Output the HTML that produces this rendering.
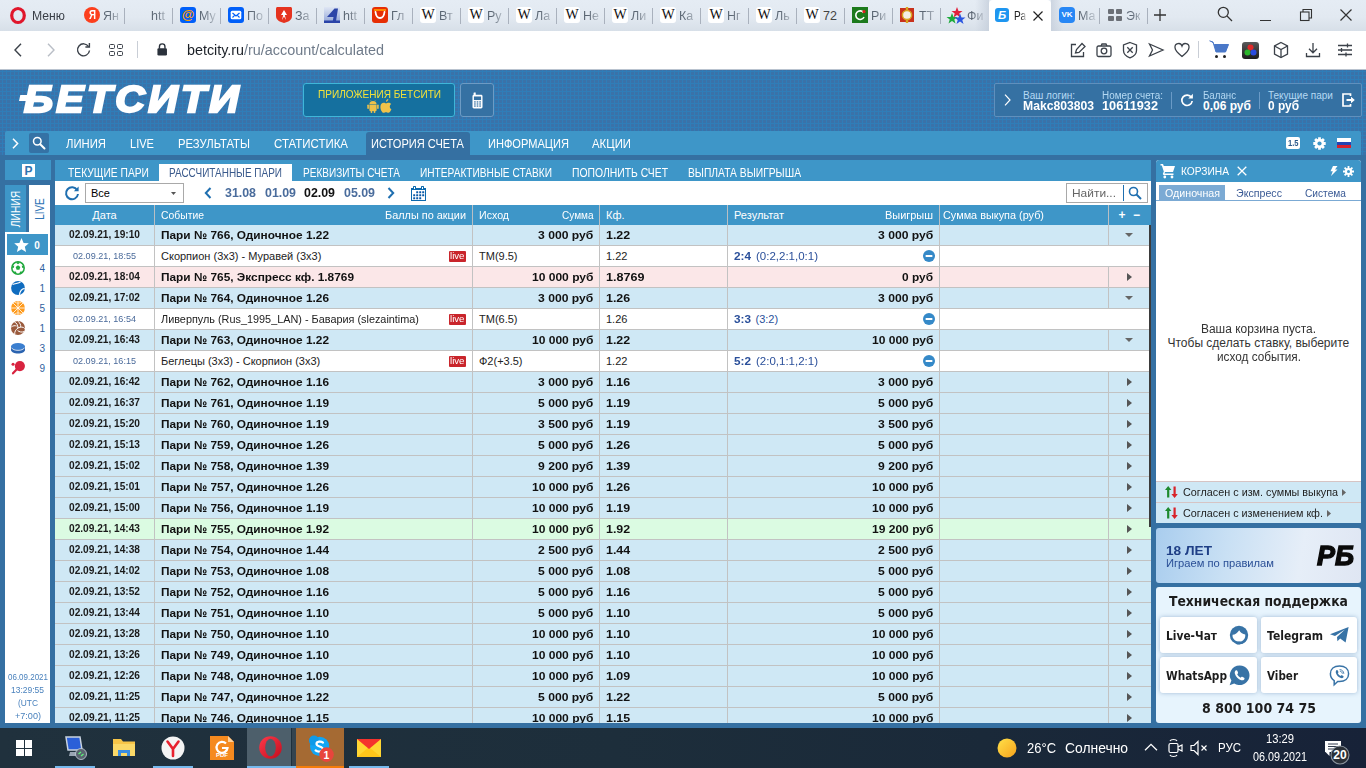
<!DOCTYPE html>
<html lang="ru"><head><meta charset="utf-8"><title>Рассчитанные пари - БЕТСИТИ</title>
<style>
html,body{margin:0;padding:0}
body{width:1366px;height:768px;overflow:hidden;position:relative;background-color:#3a72a9;
background-image:linear-gradient(#2f7db8 1px,transparent 1px),linear-gradient(90deg,#2f7db8 1px,transparent 1px);background-size:4px 4px;background-position:2px 3px;
font-family:"Liberation Sans",sans-serif}
.t{position:absolute;white-space:pre;display:block}
svg{position:absolute;overflow:visible}
div{box-sizing:border-box}
</style></head><body>
<div style="position:absolute;left:0px;top:0px;width:1366px;height:31px;background:linear-gradient(#e5ecf4,#e2e9f1 55%,#d7dfe8);"></div>
<div style="position:absolute;left:975px;top:0px;width:14px;height:31px;background:linear-gradient(90deg,rgba(196,205,218,0),rgba(196,205,218,.75));"></div>
<div style="position:absolute;left:1051px;top:0px;width:12px;height:31px;background:linear-gradient(270deg,rgba(196,205,218,0),rgba(196,205,218,.75));"></div>
<div style="position:absolute;left:989px;top:0px;width:62px;height:31px;background:#fff;border-radius:4px 4px 0 0;"></div>
<div style="position:absolute;left:124px;top:8px;width:1px;height:16px;background:#a9b1bd;"></div>
<div style="position:absolute;left:172px;top:8px;width:1px;height:16px;background:#a9b1bd;"></div>
<div style="position:absolute;left:220px;top:8px;width:1px;height:16px;background:#a9b1bd;"></div>
<div style="position:absolute;left:268px;top:8px;width:1px;height:16px;background:#a9b1bd;"></div>
<div style="position:absolute;left:316px;top:8px;width:1px;height:16px;background:#a9b1bd;"></div>
<div style="position:absolute;left:364px;top:8px;width:1px;height:16px;background:#a9b1bd;"></div>
<div style="position:absolute;left:412px;top:8px;width:1px;height:16px;background:#a9b1bd;"></div>
<div style="position:absolute;left:460px;top:8px;width:1px;height:16px;background:#a9b1bd;"></div>
<div style="position:absolute;left:508px;top:8px;width:1px;height:16px;background:#a9b1bd;"></div>
<div style="position:absolute;left:556px;top:8px;width:1px;height:16px;background:#a9b1bd;"></div>
<div style="position:absolute;left:604px;top:8px;width:1px;height:16px;background:#a9b1bd;"></div>
<div style="position:absolute;left:652px;top:8px;width:1px;height:16px;background:#a9b1bd;"></div>
<div style="position:absolute;left:700px;top:8px;width:1px;height:16px;background:#a9b1bd;"></div>
<div style="position:absolute;left:748px;top:8px;width:1px;height:16px;background:#a9b1bd;"></div>
<div style="position:absolute;left:796px;top:8px;width:1px;height:16px;background:#a9b1bd;"></div>
<div style="position:absolute;left:844px;top:8px;width:1px;height:16px;background:#a9b1bd;"></div>
<div style="position:absolute;left:892px;top:8px;width:1px;height:16px;background:#a9b1bd;"></div>
<div style="position:absolute;left:940px;top:8px;width:1px;height:16px;background:#a9b1bd;"></div>
<div style="position:absolute;left:1099px;top:8px;width:1px;height:16px;background:#a9b1bd;"></div>
<div style="position:absolute;left:1147px;top:8px;width:1px;height:16px;background:#a9b1bd;"></div>
<div style="position:absolute;left:0px;top:31px;width:1366px;height:38px;background:#fff;"></div>
<div style="position:absolute;left:0px;top:69px;width:1366px;height:1px;background:#b9c3cf;"></div>
<div style="position:absolute;left:5px;top:131px;width:1356px;height:24px;background:#3e96c8;border-radius:2px 2px 0 0;"></div>
<div style="position:absolute;left:29px;top:133px;width:20px;height:20px;background:#3572a5;border-radius:2px;"></div>
<div style="position:absolute;left:366px;top:132px;width:104px;height:23px;background:#3570a2;border-radius:3px 3px 0 0;"></div>
<span class="t" style="left:66.00px;top:135.00px;line-height:17px;color:#fff;font-family:'Liberation Sans', sans-serif;font-size:13px;font-weight:normal;transform:scaleX(0.8696);transform-origin:0 0;">ЛИНИЯ</span>
<span class="t" style="left:130.00px;top:135.00px;line-height:17px;color:#fff;font-family:'Liberation Sans', sans-serif;font-size:13px;font-weight:normal;transform:scaleX(0.8514);transform-origin:0 0;">LIVE</span>
<span class="t" style="left:178.00px;top:135.00px;line-height:17px;color:#fff;font-family:'Liberation Sans', sans-serif;font-size:13px;font-weight:normal;transform:scaleX(0.8678);transform-origin:0 0;">РЕЗУЛЬТАТЫ</span>
<span class="t" style="left:274.00px;top:135.00px;line-height:17px;color:#fff;font-family:'Liberation Sans', sans-serif;font-size:13px;font-weight:normal;transform:scaleX(0.8821);transform-origin:0 0;">СТАТИСТИКА</span>
<span class="t" style="left:371.00px;top:135.00px;line-height:17px;color:#fff;font-family:'Liberation Sans', sans-serif;font-size:13px;font-weight:normal;transform:scaleX(0.8511);transform-origin:0 0;">ИСТОРИЯ СЧЕТА</span>
<span class="t" style="left:488.00px;top:135.00px;line-height:17px;color:#fff;font-family:'Liberation Sans', sans-serif;font-size:13px;font-weight:normal;transform:scaleX(0.8517);transform-origin:0 0;">ИНФОРМАЦИЯ</span>
<span class="t" style="left:592.00px;top:135.00px;line-height:17px;color:#fff;font-family:'Liberation Sans', sans-serif;font-size:13px;font-weight:normal;transform:scaleX(0.8752);transform-origin:0 0;">АКЦИИ</span>
<div style="position:absolute;left:0px;top:155px;width:1366px;height:573px;background:#3570a2;"></div>
<div style="position:absolute;left:55px;top:160px;width:1096px;height:563px;background:#fff;"></div>
<div style="position:absolute;left:55px;top:160px;width:1096px;height:21px;background:#3e96c8;"></div>
<div style="position:absolute;left:159px;top:164px;width:133px;height:17px;background:#fff;"></div>
<span class="t" style="left:68.00px;top:165.00px;line-height:16px;color:#fff;font-family:'Liberation Sans', sans-serif;font-size:12px;font-weight:normal;transform:scaleX(0.8566);transform-origin:0 0;">ТЕКУЩИЕ ПАРИ</span>
<span class="t" style="left:169.00px;top:165.00px;line-height:16px;color:#3a5a8c;font-family:'Liberation Sans', sans-serif;font-size:12px;font-weight:normal;transform:scaleX(0.8310);transform-origin:0 0;">РАССЧИТАННЫЕ ПАРИ</span>
<span class="t" style="left:303.00px;top:165.00px;line-height:16px;color:#fff;font-family:'Liberation Sans', sans-serif;font-size:12px;font-weight:normal;transform:scaleX(0.8362);transform-origin:0 0;">РЕКВИЗИТЫ СЧЕТА</span>
<span class="t" style="left:420.00px;top:165.00px;line-height:16px;color:#fff;font-family:'Liberation Sans', sans-serif;font-size:12px;font-weight:normal;transform:scaleX(0.8449);transform-origin:0 0;">ИНТЕРАКТИВНЫЕ СТАВКИ</span>
<span class="t" style="left:572.00px;top:165.00px;line-height:16px;color:#fff;font-family:'Liberation Sans', sans-serif;font-size:12px;font-weight:normal;transform:scaleX(0.8641);transform-origin:0 0;">ПОПОЛНИТЬ СЧЕТ</span>
<span class="t" style="left:688.00px;top:165.00px;line-height:16px;color:#fff;font-family:'Liberation Sans', sans-serif;font-size:12px;font-weight:normal;transform:scaleX(0.8571);transform-origin:0 0;">ВЫПЛАТА ВЫИГРЫША</span>
<svg style="left:64px;top:185px" width="16" height="16" viewBox="0 0 16 16"><path d="M13.2 5.2A6 6 0 1 0 14 9" fill="none" stroke="#1f6fb0" stroke-width="2"/><path d="M14.6 1.5V6.3H9.8Z" fill="#1f6fb0"/></svg>
<div style="position:absolute;left:85px;top:183px;width:99px;height:20px;background:#fff;border:1px solid #a9a9a9;"></div>
<span class="t" style="left:91.00px;top:186.00px;line-height:14px;color:#000;font-family:'Liberation Sans', sans-serif;font-size:11px;font-weight:normal;">Все</span>
<svg style="left:171px;top:192px" width="5" height="3" viewBox="0 0 5 3"><path d="M0 0H5L2.5 3Z" fill="#555"/></svg>
<svg style="left:204px;top:187px" width="8" height="12" viewBox="0 0 8 12"><path d="M6.5 1L1.8 6L6.5 11" fill="none" stroke="#1f6fb0" stroke-width="2"/></svg>
<svg style="left:387px;top:187px" width="8" height="12" viewBox="0 0 8 12"><path d="M1.5 1L6.2 6L1.5 11" fill="none" stroke="#1f6fb0" stroke-width="2"/></svg>
<span class="t" style="left:225.00px;top:185.00px;line-height:16px;color:#4a6c9c;font-family:'Liberation Sans', sans-serif;font-size:12px;font-weight:bold;transform:scaleX(1.0323);transform-origin:0 0;">31.08</span>
<span class="t" style="left:265.00px;top:185.00px;line-height:16px;color:#4a6c9c;font-family:'Liberation Sans', sans-serif;font-size:12px;font-weight:bold;transform:scaleX(1.0323);transform-origin:0 0;">01.09</span>
<span class="t" style="left:304.00px;top:185.00px;line-height:16px;color:#111;font-family:'Liberation Sans', sans-serif;font-size:12px;font-weight:bold;transform:scaleX(1.0323);transform-origin:0 0;">02.09</span>
<span class="t" style="left:344.00px;top:185.00px;line-height:16px;color:#4a6c9c;font-family:'Liberation Sans', sans-serif;font-size:12px;font-weight:bold;transform:scaleX(1.0323);transform-origin:0 0;">05.09</span>
<svg style="left:411px;top:186px" width="15" height="15" viewBox="0 0 15 15"><rect x="0.500" y="2.500" width="14" height="12" fill="#fff" stroke="#0c69ad" stroke-width="1"/><rect x="0" y="2" width="15" height="2" fill="#0c69ad"/><rect x="2" y="0" width="3" height="4" rx="0.500" fill="#0c69ad"/><rect x="10" y="0" width="3" height="4" rx="0.500" fill="#0c69ad"/><rect x="3" y="1" width="1" height="2" fill="#fff"/><rect x="11" y="1" width="1" height="2" fill="#fff"/><rect x="2.2" y="8.3" width="2" height="2" rx="0.300" fill="#0a5aa8"/><rect x="2.2" y="11.3" width="2" height="2" rx="0.300" fill="#0a5aa8"/><rect x="5.2" y="5.3" width="2" height="2" rx="0.300" fill="#0a5aa8"/><rect x="5.2" y="8.3" width="2" height="2" rx="0.300" fill="#0a5aa8"/><rect x="5.2" y="11.3" width="2" height="2" rx="0.300" fill="#0a5aa8"/><rect x="8.2" y="5.3" width="2" height="2" rx="0.300" fill="#0a5aa8"/><rect x="8.2" y="8.3" width="2" height="2" rx="0.300" fill="#0a5aa8"/><rect x="8.2" y="11.3" width="2" height="2" rx="0.300" fill="#0a5aa8"/><rect x="11.2" y="5.3" width="2" height="2" rx="0.300" fill="#0a5aa8"/><rect x="11.2" y="8.3" width="2" height="2" rx="0.300" fill="#0a5aa8"/></svg>
<div style="position:absolute;left:1066px;top:183px;width:82px;height:20px;background:#fff;border:1px solid #a9a9a9;"></div>
<span class="t" style="left:1071.50px;top:186.00px;line-height:14px;color:#666;font-family:'Liberation Sans', sans-serif;font-size:11px;font-weight:normal;transform:scaleX(1.0847);transform-origin:0 0;">Найти...</span>
<div style="position:absolute;left:1123px;top:185px;width:1px;height:16px;background:#1f6fb0;"></div>
<svg style="left:1128px;top:186px" width="14" height="14" viewBox="0 0 14 14"><circle cx="5.5" cy="5.5" r="4" fill="none" stroke="#1f6fb0" stroke-width="1.6"/><path d="M8.5 8.5L13 13" stroke="#1f6fb0" stroke-width="2"/></svg>
<div style="position:absolute;left:55px;top:205px;width:1096px;height:20px;background:#3e96c8;"></div>
<div style="position:absolute;left:154px;top:205px;width:1px;height:20px;background:#b9bfc4;"></div>
<div style="position:absolute;left:472px;top:205px;width:1px;height:20px;background:#b9bfc4;"></div>
<div style="position:absolute;left:599px;top:205px;width:1px;height:20px;background:#b9bfc4;"></div>
<div style="position:absolute;left:727px;top:205px;width:1px;height:20px;background:#b9bfc4;"></div>
<div style="position:absolute;left:939px;top:205px;width:1px;height:20px;background:#b9bfc4;"></div>
<div style="position:absolute;left:1108px;top:205px;width:1px;height:20px;background:#b9bfc4;"></div>
<span class="t" style="left:92.32px;top:208.00px;line-height:14px;color:#fff;font-family:'Liberation Sans', sans-serif;font-size:11px;font-weight:normal;">Дата</span>
<span class="t" style="left:161.00px;top:208.00px;line-height:14px;color:#fff;font-family:'Liberation Sans', sans-serif;font-size:11px;font-weight:normal;transform:scaleX(0.9434);transform-origin:0 0;">Событие</span>
<span class="t" style="left:385.00px;top:208.00px;line-height:14px;color:#fff;font-family:'Liberation Sans', sans-serif;font-size:11px;font-weight:normal;transform:scaleX(0.9903);transform-origin:0 0;">Баллы по акции</span>
<span class="t" style="left:479.00px;top:208.00px;line-height:14px;color:#fff;font-family:'Liberation Sans', sans-serif;font-size:11px;font-weight:normal;transform:scaleX(0.9653);transform-origin:0 0;">Исход</span>
<span class="t" style="left:561.50px;top:208.00px;line-height:14px;color:#fff;font-family:'Liberation Sans', sans-serif;font-size:11px;font-weight:normal;transform:scaleX(0.9110);transform-origin:0 0;">Сумма</span>
<span class="t" style="left:606.00px;top:208.00px;line-height:14px;color:#fff;font-family:'Liberation Sans', sans-serif;font-size:11px;font-weight:normal;">Кф.</span>
<span class="t" style="left:734.00px;top:208.00px;line-height:14px;color:#fff;font-family:'Liberation Sans', sans-serif;font-size:11px;font-weight:normal;">Результат</span>
<span class="t" style="left:885.00px;top:208.00px;line-height:14px;color:#fff;font-family:'Liberation Sans', sans-serif;font-size:11px;font-weight:normal;transform:scaleX(0.9948);transform-origin:0 0;">Выигрыш</span>
<span class="t" style="left:943.00px;top:208.00px;line-height:14px;color:#fff;font-family:'Liberation Sans', sans-serif;font-size:11px;font-weight:normal;transform:scaleX(0.9884);transform-origin:0 0;">Сумма выкупа (руб)</span>
<span class="t" style="left:1118.49px;top:206.50px;line-height:16px;color:#fff;font-family:'Liberation Sans', sans-serif;font-size:12px;font-weight:bold;">+</span>
<span class="t" style="left:1132.99px;top:206.50px;line-height:16px;color:#fff;font-family:'Liberation Sans', sans-serif;font-size:12px;font-weight:bold;">−</span>
<div style="position:absolute;left:0;top:0;width:1366px;height:723px;overflow:hidden">
<div style="position:absolute;left:55px;top:225px;width:1096px;height:20px;background:#cfe8f5;"></div>
<div style="position:absolute;left:55px;top:245px;width:1096px;height:1px;background:#c2c2c2;"></div>
<div style="position:absolute;left:154px;top:225px;width:1px;height:21px;background:#c2c2c2;"></div>
<div style="position:absolute;left:472px;top:225px;width:1px;height:21px;background:#c2c2c2;"></div>
<div style="position:absolute;left:599px;top:225px;width:1px;height:21px;background:#c2c2c2;"></div>
<div style="position:absolute;left:727px;top:225px;width:1px;height:21px;background:#c2c2c2;"></div>
<div style="position:absolute;left:939px;top:225px;width:1px;height:21px;background:#c2c2c2;"></div>
<div style="position:absolute;left:1108px;top:225px;width:1px;height:21px;background:#c2c2c2;"></div>
<span class="t" style="left:68.70px;top:228.40px;line-height:13px;color:#1a1a1a;font-family:'Liberation Sans', sans-serif;font-size:10px;font-weight:bold;transform:scaleX(1.0134);transform-origin:0 0;">02.09.21, 19:10</span>
<span class="t" style="left:161.00px;top:227.50px;line-height:15px;color:#111;font-family:'Liberation Sans', sans-serif;font-size:11.5px;font-weight:bold;transform:scaleX(1.0314);transform-origin:0 0;">Пари № 766, Одиночное 1.22</span>
<span class="t" style="left:537.70px;top:227.50px;line-height:15px;color:#111;font-family:'Liberation Sans', sans-serif;font-size:11.5px;font-weight:bold;transform:scaleX(1.0562);transform-origin:0 0;">3 000 руб</span>
<span class="t" style="left:606.00px;top:227.50px;line-height:15px;color:#111;font-family:'Liberation Sans', sans-serif;font-size:11.5px;font-weight:bold;transform:scaleX(1.0808);transform-origin:0 0;">1.22</span>
<span class="t" style="left:877.70px;top:227.50px;line-height:15px;color:#111;font-family:'Liberation Sans', sans-serif;font-size:11.5px;font-weight:bold;transform:scaleX(1.0562);transform-origin:0 0;">3 000 руб</span>
<svg style="left:1125px;top:233px" width="8" height="4" viewBox="0 0 8 4"><path d="M0 0H8L4 4Z" fill="#666"/></svg>
<div style="position:absolute;left:55px;top:246px;width:1096px;height:20px;background:#fff;"></div>
<div style="position:absolute;left:55px;top:266px;width:1096px;height:1px;background:#c2c2c2;"></div>
<div style="position:absolute;left:154px;top:246px;width:1px;height:21px;background:#c2c2c2;"></div>
<div style="position:absolute;left:472px;top:246px;width:1px;height:21px;background:#c2c2c2;"></div>
<div style="position:absolute;left:599px;top:246px;width:1px;height:21px;background:#c2c2c2;"></div>
<div style="position:absolute;left:727px;top:246px;width:1px;height:21px;background:#c2c2c2;"></div>
<div style="position:absolute;left:939px;top:246px;width:1px;height:21px;background:#c2c2c2;"></div>
<span class="t" style="left:73.00px;top:250.00px;line-height:12px;color:#4a6a9a;font-family:'Liberation Sans', sans-serif;font-size:9px;font-weight:normal;transform:scaleX(1.0070);transform-origin:0 0;">02.09.21, 18:55</span>
<span class="t" style="left:161.00px;top:249.00px;line-height:14px;color:#222;font-family:'Liberation Sans', sans-serif;font-size:11px;font-weight:normal;">Скорпион (3x3) - Муравей (3x3)</span>
<div style="position:absolute;left:449px;top:251px;width:17px;height:11px;background:#c9252b;border-radius:1px;"></div>
<span class="t" style="left:450.25px;top:250.30px;line-height:12px;color:#fff;font-family:'Liberation Sans', sans-serif;font-size:9.5px;font-weight:normal;transform:scaleX(1.0164);transform-origin:0 0;">live</span>
<span class="t" style="left:479.00px;top:249.00px;line-height:14px;color:#222;font-family:'Liberation Sans', sans-serif;font-size:11px;font-weight:normal;">ТМ(9.5)</span>
<span class="t" style="left:606.00px;top:249.00px;line-height:14px;color:#222;font-family:'Liberation Sans', sans-serif;font-size:11px;font-weight:normal;">1.22</span>
<span class="t" style="left:734.00px;top:249.00px;line-height:14px;color:#2a4f9a;font-family:'Liberation Sans', sans-serif;font-size:11px;font-weight:bold;transform:scaleX(1.0688);transform-origin:0 0;">2:4</span>
<span class="t" style="left:755.50px;top:249.00px;line-height:14px;color:#2a4f9a;font-family:'Liberation Sans', sans-serif;font-size:11px;font-weight:normal;transform:scaleX(1.0450);transform-origin:0 0;">(0:2,2:1,0:1)</span>
<svg style="left:923px;top:250px" width="12" height="12" viewBox="0 0 12 12"><circle cx="6" cy="6" r="6" fill="#3589c8"/><rect x="2.600" y="5" width="6.800" height="2" rx="0.500" fill="#fff"/></svg>
<div style="position:absolute;left:55px;top:267px;width:1096px;height:20px;background:#fbe7e8;"></div>
<div style="position:absolute;left:55px;top:287px;width:1096px;height:1px;background:#c2c2c2;"></div>
<div style="position:absolute;left:154px;top:267px;width:1px;height:21px;background:#c2c2c2;"></div>
<div style="position:absolute;left:472px;top:267px;width:1px;height:21px;background:#c2c2c2;"></div>
<div style="position:absolute;left:599px;top:267px;width:1px;height:21px;background:#c2c2c2;"></div>
<div style="position:absolute;left:727px;top:267px;width:1px;height:21px;background:#c2c2c2;"></div>
<div style="position:absolute;left:939px;top:267px;width:1px;height:21px;background:#c2c2c2;"></div>
<div style="position:absolute;left:1108px;top:267px;width:1px;height:21px;background:#c2c2c2;"></div>
<span class="t" style="left:68.70px;top:270.40px;line-height:13px;color:#1a1a1a;font-family:'Liberation Sans', sans-serif;font-size:10px;font-weight:bold;transform:scaleX(1.0134);transform-origin:0 0;">02.09.21, 18:04</span>
<span class="t" style="left:161.00px;top:269.50px;line-height:15px;color:#111;font-family:'Liberation Sans', sans-serif;font-size:11.5px;font-weight:bold;transform:scaleX(1.0312);transform-origin:0 0;">Пари № 765, Экспресс кф. 1.8769</span>
<span class="t" style="left:531.50px;top:269.50px;line-height:15px;color:#111;font-family:'Liberation Sans', sans-serif;font-size:11.5px;font-weight:bold;transform:scaleX(1.0468);transform-origin:0 0;">10 000 руб</span>
<span class="t" style="left:606.00px;top:269.50px;line-height:15px;color:#111;font-family:'Liberation Sans', sans-serif;font-size:11.5px;font-weight:bold;transform:scaleX(1.0941);transform-origin:0 0;">1.8769</span>
<span class="t" style="left:902.00px;top:269.50px;line-height:15px;color:#111;font-family:'Liberation Sans', sans-serif;font-size:11.5px;font-weight:bold;transform:scaleX(1.0344);transform-origin:0 0;">0 руб</span>
<svg style="left:1127px;top:273px" width="5" height="8" viewBox="0 0 5 8"><path d="M0 0V8L5 4Z" fill="#555"/></svg>
<div style="position:absolute;left:55px;top:288px;width:1096px;height:20px;background:#cfe8f5;"></div>
<div style="position:absolute;left:55px;top:308px;width:1096px;height:1px;background:#c2c2c2;"></div>
<div style="position:absolute;left:154px;top:288px;width:1px;height:21px;background:#c2c2c2;"></div>
<div style="position:absolute;left:472px;top:288px;width:1px;height:21px;background:#c2c2c2;"></div>
<div style="position:absolute;left:599px;top:288px;width:1px;height:21px;background:#c2c2c2;"></div>
<div style="position:absolute;left:727px;top:288px;width:1px;height:21px;background:#c2c2c2;"></div>
<div style="position:absolute;left:939px;top:288px;width:1px;height:21px;background:#c2c2c2;"></div>
<div style="position:absolute;left:1108px;top:288px;width:1px;height:21px;background:#c2c2c2;"></div>
<span class="t" style="left:68.70px;top:291.40px;line-height:13px;color:#1a1a1a;font-family:'Liberation Sans', sans-serif;font-size:10px;font-weight:bold;transform:scaleX(1.0134);transform-origin:0 0;">02.09.21, 17:02</span>
<span class="t" style="left:161.00px;top:290.50px;line-height:15px;color:#111;font-family:'Liberation Sans', sans-serif;font-size:11.5px;font-weight:bold;transform:scaleX(1.0314);transform-origin:0 0;">Пари № 764, Одиночное 1.26</span>
<span class="t" style="left:537.70px;top:290.50px;line-height:15px;color:#111;font-family:'Liberation Sans', sans-serif;font-size:11.5px;font-weight:bold;transform:scaleX(1.0562);transform-origin:0 0;">3 000 руб</span>
<span class="t" style="left:606.00px;top:290.50px;line-height:15px;color:#111;font-family:'Liberation Sans', sans-serif;font-size:11.5px;font-weight:bold;transform:scaleX(1.0808);transform-origin:0 0;">1.26</span>
<span class="t" style="left:877.70px;top:290.50px;line-height:15px;color:#111;font-family:'Liberation Sans', sans-serif;font-size:11.5px;font-weight:bold;transform:scaleX(1.0562);transform-origin:0 0;">3 000 руб</span>
<svg style="left:1125px;top:296px" width="8" height="4" viewBox="0 0 8 4"><path d="M0 0H8L4 4Z" fill="#666"/></svg>
<div style="position:absolute;left:55px;top:309px;width:1096px;height:20px;background:#fff;"></div>
<div style="position:absolute;left:55px;top:329px;width:1096px;height:1px;background:#c2c2c2;"></div>
<div style="position:absolute;left:154px;top:309px;width:1px;height:21px;background:#c2c2c2;"></div>
<div style="position:absolute;left:472px;top:309px;width:1px;height:21px;background:#c2c2c2;"></div>
<div style="position:absolute;left:599px;top:309px;width:1px;height:21px;background:#c2c2c2;"></div>
<div style="position:absolute;left:727px;top:309px;width:1px;height:21px;background:#c2c2c2;"></div>
<div style="position:absolute;left:939px;top:309px;width:1px;height:21px;background:#c2c2c2;"></div>
<span class="t" style="left:73.00px;top:313.00px;line-height:12px;color:#4a6a9a;font-family:'Liberation Sans', sans-serif;font-size:9px;font-weight:normal;transform:scaleX(1.0070);transform-origin:0 0;">02.09.21, 16:54</span>
<span class="t" style="left:161.00px;top:312.00px;line-height:14px;color:#222;font-family:'Liberation Sans', sans-serif;font-size:11px;font-weight:normal;transform:scaleX(0.9873);transform-origin:0 0;">Ливерпуль (Rus_1995_LAN) - Бавария (slezaintima)</span>
<div style="position:absolute;left:449px;top:314px;width:17px;height:11px;background:#c9252b;border-radius:1px;"></div>
<span class="t" style="left:450.25px;top:313.30px;line-height:12px;color:#fff;font-family:'Liberation Sans', sans-serif;font-size:9.5px;font-weight:normal;transform:scaleX(1.0164);transform-origin:0 0;">live</span>
<span class="t" style="left:479.00px;top:312.00px;line-height:14px;color:#222;font-family:'Liberation Sans', sans-serif;font-size:11px;font-weight:normal;">ТМ(6.5)</span>
<span class="t" style="left:606.00px;top:312.00px;line-height:14px;color:#222;font-family:'Liberation Sans', sans-serif;font-size:11px;font-weight:normal;">1.26</span>
<span class="t" style="left:734.00px;top:312.00px;line-height:14px;color:#2a4f9a;font-family:'Liberation Sans', sans-serif;font-size:11px;font-weight:bold;transform:scaleX(1.0688);transform-origin:0 0;">3:3</span>
<span class="t" style="left:755.50px;top:312.00px;line-height:14px;color:#2a4f9a;font-family:'Liberation Sans', sans-serif;font-size:11px;font-weight:normal;">(3:2)</span>
<svg style="left:923px;top:313px" width="12" height="12" viewBox="0 0 12 12"><circle cx="6" cy="6" r="6" fill="#3589c8"/><rect x="2.600" y="5" width="6.800" height="2" rx="0.500" fill="#fff"/></svg>
<div style="position:absolute;left:55px;top:330px;width:1096px;height:20px;background:#cfe8f5;"></div>
<div style="position:absolute;left:55px;top:350px;width:1096px;height:1px;background:#c2c2c2;"></div>
<div style="position:absolute;left:154px;top:330px;width:1px;height:21px;background:#c2c2c2;"></div>
<div style="position:absolute;left:472px;top:330px;width:1px;height:21px;background:#c2c2c2;"></div>
<div style="position:absolute;left:599px;top:330px;width:1px;height:21px;background:#c2c2c2;"></div>
<div style="position:absolute;left:727px;top:330px;width:1px;height:21px;background:#c2c2c2;"></div>
<div style="position:absolute;left:939px;top:330px;width:1px;height:21px;background:#c2c2c2;"></div>
<div style="position:absolute;left:1108px;top:330px;width:1px;height:21px;background:#c2c2c2;"></div>
<span class="t" style="left:68.70px;top:333.40px;line-height:13px;color:#1a1a1a;font-family:'Liberation Sans', sans-serif;font-size:10px;font-weight:bold;transform:scaleX(1.0134);transform-origin:0 0;">02.09.21, 16:43</span>
<span class="t" style="left:161.00px;top:332.50px;line-height:15px;color:#111;font-family:'Liberation Sans', sans-serif;font-size:11.5px;font-weight:bold;transform:scaleX(1.0314);transform-origin:0 0;">Пари № 763, Одиночное 1.22</span>
<span class="t" style="left:531.50px;top:332.50px;line-height:15px;color:#111;font-family:'Liberation Sans', sans-serif;font-size:11.5px;font-weight:bold;transform:scaleX(1.0468);transform-origin:0 0;">10 000 руб</span>
<span class="t" style="left:606.00px;top:332.50px;line-height:15px;color:#111;font-family:'Liberation Sans', sans-serif;font-size:11.5px;font-weight:bold;transform:scaleX(1.0808);transform-origin:0 0;">1.22</span>
<span class="t" style="left:871.50px;top:332.50px;line-height:15px;color:#111;font-family:'Liberation Sans', sans-serif;font-size:11.5px;font-weight:bold;transform:scaleX(1.0468);transform-origin:0 0;">10 000 руб</span>
<svg style="left:1125px;top:338px" width="8" height="4" viewBox="0 0 8 4"><path d="M0 0H8L4 4Z" fill="#666"/></svg>
<div style="position:absolute;left:55px;top:351px;width:1096px;height:20px;background:#fff;"></div>
<div style="position:absolute;left:55px;top:371px;width:1096px;height:1px;background:#c2c2c2;"></div>
<div style="position:absolute;left:154px;top:351px;width:1px;height:21px;background:#c2c2c2;"></div>
<div style="position:absolute;left:472px;top:351px;width:1px;height:21px;background:#c2c2c2;"></div>
<div style="position:absolute;left:599px;top:351px;width:1px;height:21px;background:#c2c2c2;"></div>
<div style="position:absolute;left:727px;top:351px;width:1px;height:21px;background:#c2c2c2;"></div>
<div style="position:absolute;left:939px;top:351px;width:1px;height:21px;background:#c2c2c2;"></div>
<span class="t" style="left:73.00px;top:355.00px;line-height:12px;color:#4a6a9a;font-family:'Liberation Sans', sans-serif;font-size:9px;font-weight:normal;transform:scaleX(1.0070);transform-origin:0 0;">02.09.21, 16:15</span>
<span class="t" style="left:161.00px;top:354.00px;line-height:14px;color:#222;font-family:'Liberation Sans', sans-serif;font-size:11px;font-weight:normal;">Беглецы (3x3) - Скорпион (3x3)</span>
<div style="position:absolute;left:449px;top:356px;width:17px;height:11px;background:#c9252b;border-radius:1px;"></div>
<span class="t" style="left:450.25px;top:355.30px;line-height:12px;color:#fff;font-family:'Liberation Sans', sans-serif;font-size:9.5px;font-weight:normal;transform:scaleX(1.0164);transform-origin:0 0;">live</span>
<span class="t" style="left:479.00px;top:354.00px;line-height:14px;color:#222;font-family:'Liberation Sans', sans-serif;font-size:11px;font-weight:normal;">Ф2(+3.5)</span>
<span class="t" style="left:606.00px;top:354.00px;line-height:14px;color:#222;font-family:'Liberation Sans', sans-serif;font-size:11px;font-weight:normal;">1.22</span>
<span class="t" style="left:734.00px;top:354.00px;line-height:14px;color:#2a4f9a;font-family:'Liberation Sans', sans-serif;font-size:11px;font-weight:bold;transform:scaleX(1.0688);transform-origin:0 0;">5:2</span>
<span class="t" style="left:755.50px;top:354.00px;line-height:14px;color:#2a4f9a;font-family:'Liberation Sans', sans-serif;font-size:11px;font-weight:normal;transform:scaleX(1.0450);transform-origin:0 0;">(2:0,1:1,2:1)</span>
<svg style="left:923px;top:355px" width="12" height="12" viewBox="0 0 12 12"><circle cx="6" cy="6" r="6" fill="#3589c8"/><rect x="2.600" y="5" width="6.800" height="2" rx="0.500" fill="#fff"/></svg>
<div style="position:absolute;left:55px;top:372px;width:1096px;height:20px;background:#cfe8f5;"></div>
<div style="position:absolute;left:55px;top:392px;width:1096px;height:1px;background:#c2c2c2;"></div>
<div style="position:absolute;left:154px;top:372px;width:1px;height:21px;background:#c2c2c2;"></div>
<div style="position:absolute;left:472px;top:372px;width:1px;height:21px;background:#c2c2c2;"></div>
<div style="position:absolute;left:599px;top:372px;width:1px;height:21px;background:#c2c2c2;"></div>
<div style="position:absolute;left:727px;top:372px;width:1px;height:21px;background:#c2c2c2;"></div>
<div style="position:absolute;left:939px;top:372px;width:1px;height:21px;background:#c2c2c2;"></div>
<div style="position:absolute;left:1108px;top:372px;width:1px;height:21px;background:#c2c2c2;"></div>
<span class="t" style="left:68.70px;top:375.40px;line-height:13px;color:#1a1a1a;font-family:'Liberation Sans', sans-serif;font-size:10px;font-weight:bold;transform:scaleX(1.0134);transform-origin:0 0;">02.09.21, 16:42</span>
<span class="t" style="left:161.00px;top:374.50px;line-height:15px;color:#111;font-family:'Liberation Sans', sans-serif;font-size:11.5px;font-weight:bold;transform:scaleX(1.0314);transform-origin:0 0;">Пари № 762, Одиночное 1.16</span>
<span class="t" style="left:537.70px;top:374.50px;line-height:15px;color:#111;font-family:'Liberation Sans', sans-serif;font-size:11.5px;font-weight:bold;transform:scaleX(1.0562);transform-origin:0 0;">3 000 руб</span>
<span class="t" style="left:606.00px;top:374.50px;line-height:15px;color:#111;font-family:'Liberation Sans', sans-serif;font-size:11.5px;font-weight:bold;transform:scaleX(1.0808);transform-origin:0 0;">1.16</span>
<span class="t" style="left:877.70px;top:374.50px;line-height:15px;color:#111;font-family:'Liberation Sans', sans-serif;font-size:11.5px;font-weight:bold;transform:scaleX(1.0562);transform-origin:0 0;">3 000 руб</span>
<svg style="left:1127px;top:378px" width="5" height="8" viewBox="0 0 5 8"><path d="M0 0V8L5 4Z" fill="#555"/></svg>
<div style="position:absolute;left:55px;top:393px;width:1096px;height:20px;background:#cfe8f5;"></div>
<div style="position:absolute;left:55px;top:413px;width:1096px;height:1px;background:#c2c2c2;"></div>
<div style="position:absolute;left:154px;top:393px;width:1px;height:21px;background:#c2c2c2;"></div>
<div style="position:absolute;left:472px;top:393px;width:1px;height:21px;background:#c2c2c2;"></div>
<div style="position:absolute;left:599px;top:393px;width:1px;height:21px;background:#c2c2c2;"></div>
<div style="position:absolute;left:727px;top:393px;width:1px;height:21px;background:#c2c2c2;"></div>
<div style="position:absolute;left:939px;top:393px;width:1px;height:21px;background:#c2c2c2;"></div>
<div style="position:absolute;left:1108px;top:393px;width:1px;height:21px;background:#c2c2c2;"></div>
<span class="t" style="left:68.70px;top:396.40px;line-height:13px;color:#1a1a1a;font-family:'Liberation Sans', sans-serif;font-size:10px;font-weight:bold;transform:scaleX(1.0134);transform-origin:0 0;">02.09.21, 16:37</span>
<span class="t" style="left:161.00px;top:395.50px;line-height:15px;color:#111;font-family:'Liberation Sans', sans-serif;font-size:11.5px;font-weight:bold;transform:scaleX(1.0314);transform-origin:0 0;">Пари № 761, Одиночное 1.19</span>
<span class="t" style="left:537.70px;top:395.50px;line-height:15px;color:#111;font-family:'Liberation Sans', sans-serif;font-size:11.5px;font-weight:bold;transform:scaleX(1.0562);transform-origin:0 0;">5 000 руб</span>
<span class="t" style="left:606.00px;top:395.50px;line-height:15px;color:#111;font-family:'Liberation Sans', sans-serif;font-size:11.5px;font-weight:bold;transform:scaleX(1.0808);transform-origin:0 0;">1.19</span>
<span class="t" style="left:877.70px;top:395.50px;line-height:15px;color:#111;font-family:'Liberation Sans', sans-serif;font-size:11.5px;font-weight:bold;transform:scaleX(1.0562);transform-origin:0 0;">5 000 руб</span>
<svg style="left:1127px;top:399px" width="5" height="8" viewBox="0 0 5 8"><path d="M0 0V8L5 4Z" fill="#555"/></svg>
<div style="position:absolute;left:55px;top:414px;width:1096px;height:20px;background:#cfe8f5;"></div>
<div style="position:absolute;left:55px;top:434px;width:1096px;height:1px;background:#c2c2c2;"></div>
<div style="position:absolute;left:154px;top:414px;width:1px;height:21px;background:#c2c2c2;"></div>
<div style="position:absolute;left:472px;top:414px;width:1px;height:21px;background:#c2c2c2;"></div>
<div style="position:absolute;left:599px;top:414px;width:1px;height:21px;background:#c2c2c2;"></div>
<div style="position:absolute;left:727px;top:414px;width:1px;height:21px;background:#c2c2c2;"></div>
<div style="position:absolute;left:939px;top:414px;width:1px;height:21px;background:#c2c2c2;"></div>
<div style="position:absolute;left:1108px;top:414px;width:1px;height:21px;background:#c2c2c2;"></div>
<span class="t" style="left:68.70px;top:417.40px;line-height:13px;color:#1a1a1a;font-family:'Liberation Sans', sans-serif;font-size:10px;font-weight:bold;transform:scaleX(1.0134);transform-origin:0 0;">02.09.21, 15:20</span>
<span class="t" style="left:161.00px;top:416.50px;line-height:15px;color:#111;font-family:'Liberation Sans', sans-serif;font-size:11.5px;font-weight:bold;transform:scaleX(1.0314);transform-origin:0 0;">Пари № 760, Одиночное 1.19</span>
<span class="t" style="left:537.70px;top:416.50px;line-height:15px;color:#111;font-family:'Liberation Sans', sans-serif;font-size:11.5px;font-weight:bold;transform:scaleX(1.0562);transform-origin:0 0;">3 500 руб</span>
<span class="t" style="left:606.00px;top:416.50px;line-height:15px;color:#111;font-family:'Liberation Sans', sans-serif;font-size:11.5px;font-weight:bold;transform:scaleX(1.0808);transform-origin:0 0;">1.19</span>
<span class="t" style="left:877.70px;top:416.50px;line-height:15px;color:#111;font-family:'Liberation Sans', sans-serif;font-size:11.5px;font-weight:bold;transform:scaleX(1.0562);transform-origin:0 0;">3 500 руб</span>
<svg style="left:1127px;top:420px" width="5" height="8" viewBox="0 0 5 8"><path d="M0 0V8L5 4Z" fill="#555"/></svg>
<div style="position:absolute;left:55px;top:435px;width:1096px;height:20px;background:#cfe8f5;"></div>
<div style="position:absolute;left:55px;top:455px;width:1096px;height:1px;background:#c2c2c2;"></div>
<div style="position:absolute;left:154px;top:435px;width:1px;height:21px;background:#c2c2c2;"></div>
<div style="position:absolute;left:472px;top:435px;width:1px;height:21px;background:#c2c2c2;"></div>
<div style="position:absolute;left:599px;top:435px;width:1px;height:21px;background:#c2c2c2;"></div>
<div style="position:absolute;left:727px;top:435px;width:1px;height:21px;background:#c2c2c2;"></div>
<div style="position:absolute;left:939px;top:435px;width:1px;height:21px;background:#c2c2c2;"></div>
<div style="position:absolute;left:1108px;top:435px;width:1px;height:21px;background:#c2c2c2;"></div>
<span class="t" style="left:68.70px;top:438.40px;line-height:13px;color:#1a1a1a;font-family:'Liberation Sans', sans-serif;font-size:10px;font-weight:bold;transform:scaleX(1.0134);transform-origin:0 0;">02.09.21, 15:13</span>
<span class="t" style="left:161.00px;top:437.50px;line-height:15px;color:#111;font-family:'Liberation Sans', sans-serif;font-size:11.5px;font-weight:bold;transform:scaleX(1.0314);transform-origin:0 0;">Пари № 759, Одиночное 1.26</span>
<span class="t" style="left:537.70px;top:437.50px;line-height:15px;color:#111;font-family:'Liberation Sans', sans-serif;font-size:11.5px;font-weight:bold;transform:scaleX(1.0562);transform-origin:0 0;">5 000 руб</span>
<span class="t" style="left:606.00px;top:437.50px;line-height:15px;color:#111;font-family:'Liberation Sans', sans-serif;font-size:11.5px;font-weight:bold;transform:scaleX(1.0808);transform-origin:0 0;">1.26</span>
<span class="t" style="left:877.70px;top:437.50px;line-height:15px;color:#111;font-family:'Liberation Sans', sans-serif;font-size:11.5px;font-weight:bold;transform:scaleX(1.0562);transform-origin:0 0;">5 000 руб</span>
<svg style="left:1127px;top:441px" width="5" height="8" viewBox="0 0 5 8"><path d="M0 0V8L5 4Z" fill="#555"/></svg>
<div style="position:absolute;left:55px;top:456px;width:1096px;height:20px;background:#cfe8f5;"></div>
<div style="position:absolute;left:55px;top:476px;width:1096px;height:1px;background:#c2c2c2;"></div>
<div style="position:absolute;left:154px;top:456px;width:1px;height:21px;background:#c2c2c2;"></div>
<div style="position:absolute;left:472px;top:456px;width:1px;height:21px;background:#c2c2c2;"></div>
<div style="position:absolute;left:599px;top:456px;width:1px;height:21px;background:#c2c2c2;"></div>
<div style="position:absolute;left:727px;top:456px;width:1px;height:21px;background:#c2c2c2;"></div>
<div style="position:absolute;left:939px;top:456px;width:1px;height:21px;background:#c2c2c2;"></div>
<div style="position:absolute;left:1108px;top:456px;width:1px;height:21px;background:#c2c2c2;"></div>
<span class="t" style="left:68.70px;top:459.40px;line-height:13px;color:#1a1a1a;font-family:'Liberation Sans', sans-serif;font-size:10px;font-weight:bold;transform:scaleX(1.0134);transform-origin:0 0;">02.09.21, 15:02</span>
<span class="t" style="left:161.00px;top:458.50px;line-height:15px;color:#111;font-family:'Liberation Sans', sans-serif;font-size:11.5px;font-weight:bold;transform:scaleX(1.0314);transform-origin:0 0;">Пари № 758, Одиночное 1.39</span>
<span class="t" style="left:537.70px;top:458.50px;line-height:15px;color:#111;font-family:'Liberation Sans', sans-serif;font-size:11.5px;font-weight:bold;transform:scaleX(1.0562);transform-origin:0 0;">9 200 руб</span>
<span class="t" style="left:606.00px;top:458.50px;line-height:15px;color:#111;font-family:'Liberation Sans', sans-serif;font-size:11.5px;font-weight:bold;transform:scaleX(1.0808);transform-origin:0 0;">1.39</span>
<span class="t" style="left:877.70px;top:458.50px;line-height:15px;color:#111;font-family:'Liberation Sans', sans-serif;font-size:11.5px;font-weight:bold;transform:scaleX(1.0562);transform-origin:0 0;">9 200 руб</span>
<svg style="left:1127px;top:462px" width="5" height="8" viewBox="0 0 5 8"><path d="M0 0V8L5 4Z" fill="#555"/></svg>
<div style="position:absolute;left:55px;top:477px;width:1096px;height:20px;background:#cfe8f5;"></div>
<div style="position:absolute;left:55px;top:497px;width:1096px;height:1px;background:#c2c2c2;"></div>
<div style="position:absolute;left:154px;top:477px;width:1px;height:21px;background:#c2c2c2;"></div>
<div style="position:absolute;left:472px;top:477px;width:1px;height:21px;background:#c2c2c2;"></div>
<div style="position:absolute;left:599px;top:477px;width:1px;height:21px;background:#c2c2c2;"></div>
<div style="position:absolute;left:727px;top:477px;width:1px;height:21px;background:#c2c2c2;"></div>
<div style="position:absolute;left:939px;top:477px;width:1px;height:21px;background:#c2c2c2;"></div>
<div style="position:absolute;left:1108px;top:477px;width:1px;height:21px;background:#c2c2c2;"></div>
<span class="t" style="left:68.70px;top:480.40px;line-height:13px;color:#1a1a1a;font-family:'Liberation Sans', sans-serif;font-size:10px;font-weight:bold;transform:scaleX(1.0134);transform-origin:0 0;">02.09.21, 15:01</span>
<span class="t" style="left:161.00px;top:479.50px;line-height:15px;color:#111;font-family:'Liberation Sans', sans-serif;font-size:11.5px;font-weight:bold;transform:scaleX(1.0314);transform-origin:0 0;">Пари № 757, Одиночное 1.26</span>
<span class="t" style="left:531.50px;top:479.50px;line-height:15px;color:#111;font-family:'Liberation Sans', sans-serif;font-size:11.5px;font-weight:bold;transform:scaleX(1.0468);transform-origin:0 0;">10 000 руб</span>
<span class="t" style="left:606.00px;top:479.50px;line-height:15px;color:#111;font-family:'Liberation Sans', sans-serif;font-size:11.5px;font-weight:bold;transform:scaleX(1.0808);transform-origin:0 0;">1.26</span>
<span class="t" style="left:871.50px;top:479.50px;line-height:15px;color:#111;font-family:'Liberation Sans', sans-serif;font-size:11.5px;font-weight:bold;transform:scaleX(1.0468);transform-origin:0 0;">10 000 руб</span>
<svg style="left:1127px;top:483px" width="5" height="8" viewBox="0 0 5 8"><path d="M0 0V8L5 4Z" fill="#555"/></svg>
<div style="position:absolute;left:55px;top:498px;width:1096px;height:20px;background:#cfe8f5;"></div>
<div style="position:absolute;left:55px;top:518px;width:1096px;height:1px;background:#c2c2c2;"></div>
<div style="position:absolute;left:154px;top:498px;width:1px;height:21px;background:#c2c2c2;"></div>
<div style="position:absolute;left:472px;top:498px;width:1px;height:21px;background:#c2c2c2;"></div>
<div style="position:absolute;left:599px;top:498px;width:1px;height:21px;background:#c2c2c2;"></div>
<div style="position:absolute;left:727px;top:498px;width:1px;height:21px;background:#c2c2c2;"></div>
<div style="position:absolute;left:939px;top:498px;width:1px;height:21px;background:#c2c2c2;"></div>
<div style="position:absolute;left:1108px;top:498px;width:1px;height:21px;background:#c2c2c2;"></div>
<span class="t" style="left:68.70px;top:501.40px;line-height:13px;color:#1a1a1a;font-family:'Liberation Sans', sans-serif;font-size:10px;font-weight:bold;transform:scaleX(1.0134);transform-origin:0 0;">02.09.21, 15:00</span>
<span class="t" style="left:161.00px;top:500.50px;line-height:15px;color:#111;font-family:'Liberation Sans', sans-serif;font-size:11.5px;font-weight:bold;transform:scaleX(1.0314);transform-origin:0 0;">Пари № 756, Одиночное 1.19</span>
<span class="t" style="left:531.50px;top:500.50px;line-height:15px;color:#111;font-family:'Liberation Sans', sans-serif;font-size:11.5px;font-weight:bold;transform:scaleX(1.0468);transform-origin:0 0;">10 000 руб</span>
<span class="t" style="left:606.00px;top:500.50px;line-height:15px;color:#111;font-family:'Liberation Sans', sans-serif;font-size:11.5px;font-weight:bold;transform:scaleX(1.0808);transform-origin:0 0;">1.19</span>
<span class="t" style="left:871.50px;top:500.50px;line-height:15px;color:#111;font-family:'Liberation Sans', sans-serif;font-size:11.5px;font-weight:bold;transform:scaleX(1.0468);transform-origin:0 0;">10 000 руб</span>
<svg style="left:1127px;top:504px" width="5" height="8" viewBox="0 0 5 8"><path d="M0 0V8L5 4Z" fill="#555"/></svg>
<div style="position:absolute;left:55px;top:519px;width:1096px;height:20px;background:#dbfbe2;"></div>
<div style="position:absolute;left:55px;top:539px;width:1096px;height:1px;background:#c2c2c2;"></div>
<div style="position:absolute;left:154px;top:519px;width:1px;height:21px;background:#c2c2c2;"></div>
<div style="position:absolute;left:472px;top:519px;width:1px;height:21px;background:#c2c2c2;"></div>
<div style="position:absolute;left:599px;top:519px;width:1px;height:21px;background:#c2c2c2;"></div>
<div style="position:absolute;left:727px;top:519px;width:1px;height:21px;background:#c2c2c2;"></div>
<div style="position:absolute;left:939px;top:519px;width:1px;height:21px;background:#c2c2c2;"></div>
<div style="position:absolute;left:1108px;top:519px;width:1px;height:21px;background:#c2c2c2;"></div>
<span class="t" style="left:68.70px;top:522.40px;line-height:13px;color:#1a1a1a;font-family:'Liberation Sans', sans-serif;font-size:10px;font-weight:bold;transform:scaleX(1.0134);transform-origin:0 0;">02.09.21, 14:43</span>
<span class="t" style="left:161.00px;top:521.50px;line-height:15px;color:#111;font-family:'Liberation Sans', sans-serif;font-size:11.5px;font-weight:bold;transform:scaleX(1.0314);transform-origin:0 0;">Пари № 755, Одиночное 1.92</span>
<span class="t" style="left:531.50px;top:521.50px;line-height:15px;color:#111;font-family:'Liberation Sans', sans-serif;font-size:11.5px;font-weight:bold;transform:scaleX(1.0468);transform-origin:0 0;">10 000 руб</span>
<span class="t" style="left:606.00px;top:521.50px;line-height:15px;color:#111;font-family:'Liberation Sans', sans-serif;font-size:11.5px;font-weight:bold;transform:scaleX(1.0808);transform-origin:0 0;">1.92</span>
<span class="t" style="left:871.50px;top:521.50px;line-height:15px;color:#111;font-family:'Liberation Sans', sans-serif;font-size:11.5px;font-weight:bold;transform:scaleX(1.0468);transform-origin:0 0;">19 200 руб</span>
<svg style="left:1127px;top:525px" width="5" height="8" viewBox="0 0 5 8"><path d="M0 0V8L5 4Z" fill="#555"/></svg>
<div style="position:absolute;left:55px;top:540px;width:1096px;height:20px;background:#cfe8f5;"></div>
<div style="position:absolute;left:55px;top:560px;width:1096px;height:1px;background:#c2c2c2;"></div>
<div style="position:absolute;left:154px;top:540px;width:1px;height:21px;background:#c2c2c2;"></div>
<div style="position:absolute;left:472px;top:540px;width:1px;height:21px;background:#c2c2c2;"></div>
<div style="position:absolute;left:599px;top:540px;width:1px;height:21px;background:#c2c2c2;"></div>
<div style="position:absolute;left:727px;top:540px;width:1px;height:21px;background:#c2c2c2;"></div>
<div style="position:absolute;left:939px;top:540px;width:1px;height:21px;background:#c2c2c2;"></div>
<div style="position:absolute;left:1108px;top:540px;width:1px;height:21px;background:#c2c2c2;"></div>
<span class="t" style="left:68.70px;top:543.40px;line-height:13px;color:#1a1a1a;font-family:'Liberation Sans', sans-serif;font-size:10px;font-weight:bold;transform:scaleX(1.0134);transform-origin:0 0;">02.09.21, 14:38</span>
<span class="t" style="left:161.00px;top:542.50px;line-height:15px;color:#111;font-family:'Liberation Sans', sans-serif;font-size:11.5px;font-weight:bold;transform:scaleX(1.0314);transform-origin:0 0;">Пари № 754, Одиночное 1.44</span>
<span class="t" style="left:537.70px;top:542.50px;line-height:15px;color:#111;font-family:'Liberation Sans', sans-serif;font-size:11.5px;font-weight:bold;transform:scaleX(1.0562);transform-origin:0 0;">2 500 руб</span>
<span class="t" style="left:606.00px;top:542.50px;line-height:15px;color:#111;font-family:'Liberation Sans', sans-serif;font-size:11.5px;font-weight:bold;transform:scaleX(1.0808);transform-origin:0 0;">1.44</span>
<span class="t" style="left:877.70px;top:542.50px;line-height:15px;color:#111;font-family:'Liberation Sans', sans-serif;font-size:11.5px;font-weight:bold;transform:scaleX(1.0562);transform-origin:0 0;">2 500 руб</span>
<svg style="left:1127px;top:546px" width="5" height="8" viewBox="0 0 5 8"><path d="M0 0V8L5 4Z" fill="#555"/></svg>
<div style="position:absolute;left:55px;top:561px;width:1096px;height:20px;background:#cfe8f5;"></div>
<div style="position:absolute;left:55px;top:581px;width:1096px;height:1px;background:#c2c2c2;"></div>
<div style="position:absolute;left:154px;top:561px;width:1px;height:21px;background:#c2c2c2;"></div>
<div style="position:absolute;left:472px;top:561px;width:1px;height:21px;background:#c2c2c2;"></div>
<div style="position:absolute;left:599px;top:561px;width:1px;height:21px;background:#c2c2c2;"></div>
<div style="position:absolute;left:727px;top:561px;width:1px;height:21px;background:#c2c2c2;"></div>
<div style="position:absolute;left:939px;top:561px;width:1px;height:21px;background:#c2c2c2;"></div>
<div style="position:absolute;left:1108px;top:561px;width:1px;height:21px;background:#c2c2c2;"></div>
<span class="t" style="left:68.70px;top:564.40px;line-height:13px;color:#1a1a1a;font-family:'Liberation Sans', sans-serif;font-size:10px;font-weight:bold;transform:scaleX(1.0134);transform-origin:0 0;">02.09.21, 14:02</span>
<span class="t" style="left:161.00px;top:563.50px;line-height:15px;color:#111;font-family:'Liberation Sans', sans-serif;font-size:11.5px;font-weight:bold;transform:scaleX(1.0314);transform-origin:0 0;">Пари № 753, Одиночное 1.08</span>
<span class="t" style="left:537.70px;top:563.50px;line-height:15px;color:#111;font-family:'Liberation Sans', sans-serif;font-size:11.5px;font-weight:bold;transform:scaleX(1.0562);transform-origin:0 0;">5 000 руб</span>
<span class="t" style="left:606.00px;top:563.50px;line-height:15px;color:#111;font-family:'Liberation Sans', sans-serif;font-size:11.5px;font-weight:bold;transform:scaleX(1.0808);transform-origin:0 0;">1.08</span>
<span class="t" style="left:877.70px;top:563.50px;line-height:15px;color:#111;font-family:'Liberation Sans', sans-serif;font-size:11.5px;font-weight:bold;transform:scaleX(1.0562);transform-origin:0 0;">5 000 руб</span>
<svg style="left:1127px;top:567px" width="5" height="8" viewBox="0 0 5 8"><path d="M0 0V8L5 4Z" fill="#555"/></svg>
<div style="position:absolute;left:55px;top:582px;width:1096px;height:20px;background:#cfe8f5;"></div>
<div style="position:absolute;left:55px;top:602px;width:1096px;height:1px;background:#c2c2c2;"></div>
<div style="position:absolute;left:154px;top:582px;width:1px;height:21px;background:#c2c2c2;"></div>
<div style="position:absolute;left:472px;top:582px;width:1px;height:21px;background:#c2c2c2;"></div>
<div style="position:absolute;left:599px;top:582px;width:1px;height:21px;background:#c2c2c2;"></div>
<div style="position:absolute;left:727px;top:582px;width:1px;height:21px;background:#c2c2c2;"></div>
<div style="position:absolute;left:939px;top:582px;width:1px;height:21px;background:#c2c2c2;"></div>
<div style="position:absolute;left:1108px;top:582px;width:1px;height:21px;background:#c2c2c2;"></div>
<span class="t" style="left:68.70px;top:585.40px;line-height:13px;color:#1a1a1a;font-family:'Liberation Sans', sans-serif;font-size:10px;font-weight:bold;transform:scaleX(1.0134);transform-origin:0 0;">02.09.21, 13:52</span>
<span class="t" style="left:161.00px;top:584.50px;line-height:15px;color:#111;font-family:'Liberation Sans', sans-serif;font-size:11.5px;font-weight:bold;transform:scaleX(1.0314);transform-origin:0 0;">Пари № 752, Одиночное 1.16</span>
<span class="t" style="left:537.70px;top:584.50px;line-height:15px;color:#111;font-family:'Liberation Sans', sans-serif;font-size:11.5px;font-weight:bold;transform:scaleX(1.0562);transform-origin:0 0;">5 000 руб</span>
<span class="t" style="left:606.00px;top:584.50px;line-height:15px;color:#111;font-family:'Liberation Sans', sans-serif;font-size:11.5px;font-weight:bold;transform:scaleX(1.0808);transform-origin:0 0;">1.16</span>
<span class="t" style="left:877.70px;top:584.50px;line-height:15px;color:#111;font-family:'Liberation Sans', sans-serif;font-size:11.5px;font-weight:bold;transform:scaleX(1.0562);transform-origin:0 0;">5 000 руб</span>
<svg style="left:1127px;top:588px" width="5" height="8" viewBox="0 0 5 8"><path d="M0 0V8L5 4Z" fill="#555"/></svg>
<div style="position:absolute;left:55px;top:603px;width:1096px;height:20px;background:#cfe8f5;"></div>
<div style="position:absolute;left:55px;top:623px;width:1096px;height:1px;background:#c2c2c2;"></div>
<div style="position:absolute;left:154px;top:603px;width:1px;height:21px;background:#c2c2c2;"></div>
<div style="position:absolute;left:472px;top:603px;width:1px;height:21px;background:#c2c2c2;"></div>
<div style="position:absolute;left:599px;top:603px;width:1px;height:21px;background:#c2c2c2;"></div>
<div style="position:absolute;left:727px;top:603px;width:1px;height:21px;background:#c2c2c2;"></div>
<div style="position:absolute;left:939px;top:603px;width:1px;height:21px;background:#c2c2c2;"></div>
<div style="position:absolute;left:1108px;top:603px;width:1px;height:21px;background:#c2c2c2;"></div>
<span class="t" style="left:68.70px;top:606.40px;line-height:13px;color:#1a1a1a;font-family:'Liberation Sans', sans-serif;font-size:10px;font-weight:bold;transform:scaleX(1.0134);transform-origin:0 0;">02.09.21, 13:44</span>
<span class="t" style="left:161.00px;top:605.50px;line-height:15px;color:#111;font-family:'Liberation Sans', sans-serif;font-size:11.5px;font-weight:bold;transform:scaleX(1.0314);transform-origin:0 0;">Пари № 751, Одиночное 1.10</span>
<span class="t" style="left:537.70px;top:605.50px;line-height:15px;color:#111;font-family:'Liberation Sans', sans-serif;font-size:11.5px;font-weight:bold;transform:scaleX(1.0562);transform-origin:0 0;">5 000 руб</span>
<span class="t" style="left:606.00px;top:605.50px;line-height:15px;color:#111;font-family:'Liberation Sans', sans-serif;font-size:11.5px;font-weight:bold;transform:scaleX(1.0808);transform-origin:0 0;">1.10</span>
<span class="t" style="left:877.70px;top:605.50px;line-height:15px;color:#111;font-family:'Liberation Sans', sans-serif;font-size:11.5px;font-weight:bold;transform:scaleX(1.0562);transform-origin:0 0;">5 000 руб</span>
<svg style="left:1127px;top:609px" width="5" height="8" viewBox="0 0 5 8"><path d="M0 0V8L5 4Z" fill="#555"/></svg>
<div style="position:absolute;left:55px;top:624px;width:1096px;height:20px;background:#cfe8f5;"></div>
<div style="position:absolute;left:55px;top:644px;width:1096px;height:1px;background:#c2c2c2;"></div>
<div style="position:absolute;left:154px;top:624px;width:1px;height:21px;background:#c2c2c2;"></div>
<div style="position:absolute;left:472px;top:624px;width:1px;height:21px;background:#c2c2c2;"></div>
<div style="position:absolute;left:599px;top:624px;width:1px;height:21px;background:#c2c2c2;"></div>
<div style="position:absolute;left:727px;top:624px;width:1px;height:21px;background:#c2c2c2;"></div>
<div style="position:absolute;left:939px;top:624px;width:1px;height:21px;background:#c2c2c2;"></div>
<div style="position:absolute;left:1108px;top:624px;width:1px;height:21px;background:#c2c2c2;"></div>
<span class="t" style="left:68.70px;top:627.40px;line-height:13px;color:#1a1a1a;font-family:'Liberation Sans', sans-serif;font-size:10px;font-weight:bold;transform:scaleX(1.0134);transform-origin:0 0;">02.09.21, 13:28</span>
<span class="t" style="left:161.00px;top:626.50px;line-height:15px;color:#111;font-family:'Liberation Sans', sans-serif;font-size:11.5px;font-weight:bold;transform:scaleX(1.0314);transform-origin:0 0;">Пари № 750, Одиночное 1.10</span>
<span class="t" style="left:531.50px;top:626.50px;line-height:15px;color:#111;font-family:'Liberation Sans', sans-serif;font-size:11.5px;font-weight:bold;transform:scaleX(1.0468);transform-origin:0 0;">10 000 руб</span>
<span class="t" style="left:606.00px;top:626.50px;line-height:15px;color:#111;font-family:'Liberation Sans', sans-serif;font-size:11.5px;font-weight:bold;transform:scaleX(1.0808);transform-origin:0 0;">1.10</span>
<span class="t" style="left:871.50px;top:626.50px;line-height:15px;color:#111;font-family:'Liberation Sans', sans-serif;font-size:11.5px;font-weight:bold;transform:scaleX(1.0468);transform-origin:0 0;">10 000 руб</span>
<svg style="left:1127px;top:630px" width="5" height="8" viewBox="0 0 5 8"><path d="M0 0V8L5 4Z" fill="#555"/></svg>
<div style="position:absolute;left:55px;top:645px;width:1096px;height:20px;background:#cfe8f5;"></div>
<div style="position:absolute;left:55px;top:665px;width:1096px;height:1px;background:#c2c2c2;"></div>
<div style="position:absolute;left:154px;top:645px;width:1px;height:21px;background:#c2c2c2;"></div>
<div style="position:absolute;left:472px;top:645px;width:1px;height:21px;background:#c2c2c2;"></div>
<div style="position:absolute;left:599px;top:645px;width:1px;height:21px;background:#c2c2c2;"></div>
<div style="position:absolute;left:727px;top:645px;width:1px;height:21px;background:#c2c2c2;"></div>
<div style="position:absolute;left:939px;top:645px;width:1px;height:21px;background:#c2c2c2;"></div>
<div style="position:absolute;left:1108px;top:645px;width:1px;height:21px;background:#c2c2c2;"></div>
<span class="t" style="left:68.70px;top:648.40px;line-height:13px;color:#1a1a1a;font-family:'Liberation Sans', sans-serif;font-size:10px;font-weight:bold;transform:scaleX(1.0134);transform-origin:0 0;">02.09.21, 13:26</span>
<span class="t" style="left:161.00px;top:647.50px;line-height:15px;color:#111;font-family:'Liberation Sans', sans-serif;font-size:11.5px;font-weight:bold;transform:scaleX(1.0314);transform-origin:0 0;">Пари № 749, Одиночное 1.10</span>
<span class="t" style="left:531.50px;top:647.50px;line-height:15px;color:#111;font-family:'Liberation Sans', sans-serif;font-size:11.5px;font-weight:bold;transform:scaleX(1.0468);transform-origin:0 0;">10 000 руб</span>
<span class="t" style="left:606.00px;top:647.50px;line-height:15px;color:#111;font-family:'Liberation Sans', sans-serif;font-size:11.5px;font-weight:bold;transform:scaleX(1.0808);transform-origin:0 0;">1.10</span>
<span class="t" style="left:871.50px;top:647.50px;line-height:15px;color:#111;font-family:'Liberation Sans', sans-serif;font-size:11.5px;font-weight:bold;transform:scaleX(1.0468);transform-origin:0 0;">10 000 руб</span>
<svg style="left:1127px;top:651px" width="5" height="8" viewBox="0 0 5 8"><path d="M0 0V8L5 4Z" fill="#555"/></svg>
<div style="position:absolute;left:55px;top:666px;width:1096px;height:20px;background:#cfe8f5;"></div>
<div style="position:absolute;left:55px;top:686px;width:1096px;height:1px;background:#c2c2c2;"></div>
<div style="position:absolute;left:154px;top:666px;width:1px;height:21px;background:#c2c2c2;"></div>
<div style="position:absolute;left:472px;top:666px;width:1px;height:21px;background:#c2c2c2;"></div>
<div style="position:absolute;left:599px;top:666px;width:1px;height:21px;background:#c2c2c2;"></div>
<div style="position:absolute;left:727px;top:666px;width:1px;height:21px;background:#c2c2c2;"></div>
<div style="position:absolute;left:939px;top:666px;width:1px;height:21px;background:#c2c2c2;"></div>
<div style="position:absolute;left:1108px;top:666px;width:1px;height:21px;background:#c2c2c2;"></div>
<span class="t" style="left:68.70px;top:669.40px;line-height:13px;color:#1a1a1a;font-family:'Liberation Sans', sans-serif;font-size:10px;font-weight:bold;transform:scaleX(1.0134);transform-origin:0 0;">02.09.21, 12:26</span>
<span class="t" style="left:161.00px;top:668.50px;line-height:15px;color:#111;font-family:'Liberation Sans', sans-serif;font-size:11.5px;font-weight:bold;transform:scaleX(1.0314);transform-origin:0 0;">Пари № 748, Одиночное 1.09</span>
<span class="t" style="left:531.50px;top:668.50px;line-height:15px;color:#111;font-family:'Liberation Sans', sans-serif;font-size:11.5px;font-weight:bold;transform:scaleX(1.0468);transform-origin:0 0;">10 000 руб</span>
<span class="t" style="left:606.00px;top:668.50px;line-height:15px;color:#111;font-family:'Liberation Sans', sans-serif;font-size:11.5px;font-weight:bold;transform:scaleX(1.0808);transform-origin:0 0;">1.09</span>
<span class="t" style="left:871.50px;top:668.50px;line-height:15px;color:#111;font-family:'Liberation Sans', sans-serif;font-size:11.5px;font-weight:bold;transform:scaleX(1.0468);transform-origin:0 0;">10 000 руб</span>
<svg style="left:1127px;top:672px" width="5" height="8" viewBox="0 0 5 8"><path d="M0 0V8L5 4Z" fill="#555"/></svg>
<div style="position:absolute;left:55px;top:687px;width:1096px;height:20px;background:#cfe8f5;"></div>
<div style="position:absolute;left:55px;top:707px;width:1096px;height:1px;background:#c2c2c2;"></div>
<div style="position:absolute;left:154px;top:687px;width:1px;height:21px;background:#c2c2c2;"></div>
<div style="position:absolute;left:472px;top:687px;width:1px;height:21px;background:#c2c2c2;"></div>
<div style="position:absolute;left:599px;top:687px;width:1px;height:21px;background:#c2c2c2;"></div>
<div style="position:absolute;left:727px;top:687px;width:1px;height:21px;background:#c2c2c2;"></div>
<div style="position:absolute;left:939px;top:687px;width:1px;height:21px;background:#c2c2c2;"></div>
<div style="position:absolute;left:1108px;top:687px;width:1px;height:21px;background:#c2c2c2;"></div>
<span class="t" style="left:68.70px;top:690.40px;line-height:13px;color:#1a1a1a;font-family:'Liberation Sans', sans-serif;font-size:10px;font-weight:bold;transform:scaleX(1.0214);transform-origin:0 0;">02.09.21, 11:25</span>
<span class="t" style="left:161.00px;top:689.50px;line-height:15px;color:#111;font-family:'Liberation Sans', sans-serif;font-size:11.5px;font-weight:bold;transform:scaleX(1.0314);transform-origin:0 0;">Пари № 747, Одиночное 1.22</span>
<span class="t" style="left:537.70px;top:689.50px;line-height:15px;color:#111;font-family:'Liberation Sans', sans-serif;font-size:11.5px;font-weight:bold;transform:scaleX(1.0562);transform-origin:0 0;">5 000 руб</span>
<span class="t" style="left:606.00px;top:689.50px;line-height:15px;color:#111;font-family:'Liberation Sans', sans-serif;font-size:11.5px;font-weight:bold;transform:scaleX(1.0808);transform-origin:0 0;">1.22</span>
<span class="t" style="left:877.70px;top:689.50px;line-height:15px;color:#111;font-family:'Liberation Sans', sans-serif;font-size:11.5px;font-weight:bold;transform:scaleX(1.0562);transform-origin:0 0;">5 000 руб</span>
<svg style="left:1127px;top:693px" width="5" height="8" viewBox="0 0 5 8"><path d="M0 0V8L5 4Z" fill="#555"/></svg>
<div style="position:absolute;left:55px;top:708px;width:1096px;height:20px;background:#cfe8f5;"></div>
<div style="position:absolute;left:55px;top:728px;width:1096px;height:1px;background:#c2c2c2;"></div>
<div style="position:absolute;left:154px;top:708px;width:1px;height:21px;background:#c2c2c2;"></div>
<div style="position:absolute;left:472px;top:708px;width:1px;height:21px;background:#c2c2c2;"></div>
<div style="position:absolute;left:599px;top:708px;width:1px;height:21px;background:#c2c2c2;"></div>
<div style="position:absolute;left:727px;top:708px;width:1px;height:21px;background:#c2c2c2;"></div>
<div style="position:absolute;left:939px;top:708px;width:1px;height:21px;background:#c2c2c2;"></div>
<div style="position:absolute;left:1108px;top:708px;width:1px;height:21px;background:#c2c2c2;"></div>
<span class="t" style="left:68.70px;top:711.40px;line-height:13px;color:#1a1a1a;font-family:'Liberation Sans', sans-serif;font-size:10px;font-weight:bold;transform:scaleX(1.0214);transform-origin:0 0;">02.09.21, 11:25</span>
<span class="t" style="left:161.00px;top:710.50px;line-height:15px;color:#111;font-family:'Liberation Sans', sans-serif;font-size:11.5px;font-weight:bold;transform:scaleX(1.0314);transform-origin:0 0;">Пари № 746, Одиночное 1.15</span>
<span class="t" style="left:531.50px;top:710.50px;line-height:15px;color:#111;font-family:'Liberation Sans', sans-serif;font-size:11.5px;font-weight:bold;transform:scaleX(1.0468);transform-origin:0 0;">10 000 руб</span>
<span class="t" style="left:606.00px;top:710.50px;line-height:15px;color:#111;font-family:'Liberation Sans', sans-serif;font-size:11.5px;font-weight:bold;transform:scaleX(1.0808);transform-origin:0 0;">1.15</span>
<span class="t" style="left:871.50px;top:710.50px;line-height:15px;color:#111;font-family:'Liberation Sans', sans-serif;font-size:11.5px;font-weight:bold;transform:scaleX(1.0468);transform-origin:0 0;">10 000 руб</span>
<svg style="left:1127px;top:714px" width="5" height="8" viewBox="0 0 5 8"><path d="M0 0V8L5 4Z" fill="#555"/></svg>
</div>
<div style="position:absolute;left:1149px;top:225px;width:2px;height:302px;background:#3b3b3b;"></div>
<div style="position:absolute;left:5px;top:160px;width:46px;height:20px;background:#3e96c8;"></div>
<div style="position:absolute;left:22px;top:164px;width:13px;height:13px;background:#fff;"></div>
<span class="t" style="left:24.49px;top:162.50px;line-height:16px;color:#2f74b0;font-family:'Liberation Sans', sans-serif;font-size:12px;font-weight:bold;">P</span>
<div style="position:absolute;left:5px;top:185px;width:21px;height:47px;background:#3e96c8;"></div>
<div style="position:absolute;left:29px;top:185px;width:21px;height:47px;background:#fff;"></div>
<div style="position:absolute;left:5px;top:232px;width:45px;height:491px;background:#fff;"></div>
<span class="t" style="left:5px;top:185px;width:21px;height:47px;"><span style="position:absolute;left:10.5px;top:24.2px;transform:translate(-50%,-50%) rotate(-90deg) scaleX(.86);font-size:12px;color:#fff;line-height:12px;white-space:pre">ЛИНИЯ</span></span>
<span class="t" style="left:29px;top:185px;width:21px;height:47px;"><span style="position:absolute;left:11px;top:24.2px;transform:translate(-50%,-50%) rotate(-90deg) scaleX(.82);font-size:12px;color:#2f74b5;line-height:12px;white-space:pre">LIVE</span></span>
<div style="position:absolute;left:7px;top:234px;width:41px;height:21px;background:#3e96c8;"></div>
<svg style="left:14px;top:238px" width="15" height="14" viewBox="0 0 15 14"><path d="M7.5 0L9.6 4.9L14.8 5.3L10.8 8.8L12.1 14L7.5 11.2L2.9 14L4.2 8.8L0.2 5.3L5.4 4.9Z" fill="#fff"/></svg>
<span class="t" style="left:34.22px;top:238.50px;line-height:13px;color:#fff;font-family:'Liberation Sans', sans-serif;font-size:10px;font-weight:bold;">0</span>
<span class="t" style="left:39.52px;top:262.20px;line-height:13px;color:#2f5f9e;font-family:'Liberation Sans', sans-serif;font-size:10px;font-weight:normal;">4</span>
<span class="t" style="left:39.52px;top:282.20px;line-height:13px;color:#2f5f9e;font-family:'Liberation Sans', sans-serif;font-size:10px;font-weight:normal;">1</span>
<span class="t" style="left:39.52px;top:302.20px;line-height:13px;color:#2f5f9e;font-family:'Liberation Sans', sans-serif;font-size:10px;font-weight:normal;">5</span>
<span class="t" style="left:39.52px;top:322.20px;line-height:13px;color:#2f5f9e;font-family:'Liberation Sans', sans-serif;font-size:10px;font-weight:normal;">1</span>
<span class="t" style="left:39.52px;top:342.20px;line-height:13px;color:#2f5f9e;font-family:'Liberation Sans', sans-serif;font-size:10px;font-weight:normal;">3</span>
<span class="t" style="left:39.52px;top:362.20px;line-height:13px;color:#2f5f9e;font-family:'Liberation Sans', sans-serif;font-size:10px;font-weight:normal;">9</span>
<svg style="left:11px;top:261px" width="14" height="14" viewBox="0 0 14 14"><circle cx="7" cy="7" r="6.200" fill="#fff" stroke="#1fa83c" stroke-width="1.500"/><path d="M7 4.300L9.300 6L8.400 8.700H5.600L4.700 6Z" fill="#1fa83c"/><path d="M7 0.800L8.800 2.100L7 3.200L5.200 2.100ZM12.900 5.200L12.700 7.600L11 6.600L10.800 4.600ZM10.800 12.200L8.600 12.900L8.800 10.900L10.400 10ZM3.200 12.200L3.600 10L5.200 10.900L5.400 12.900ZM1.100 5.200L3.200 4.600L3 6.600L1.300 7.600Z" fill="#1fa83c"/></svg>
<svg style="left:11px;top:281px" width="14" height="14" viewBox="0 0 14 14"><circle cx="7" cy="7" r="6.900" fill="#0f6cbf"/><path d="M1.600 3.400C4.400 2.200 8 2.600 9.600 0.800" fill="none" stroke="#fff" stroke-width="1.100"/><path d="M13.700 7.400C10.800 7.800 9 10.200 8.400 13.800" fill="none" stroke="#fff" stroke-width="1.200"/></svg>
<svg style="left:11px;top:301px" width="14" height="14" viewBox="0 0 14 14"><circle cx="7" cy="7" r="6.900" fill="#ff9a1a"/><path d="M7 0V14M0 7H14M2 2L12 12M12 2L2 12" fill="none" stroke="#fff" stroke-width="0.800"/><path d="M3.200 0.800C5.500 2.600 8.500 2.600 10.800 0.800M3.200 13.200C5.500 11.400 8.500 11.400 10.800 13.200" fill="none" stroke="#fff" stroke-width="0.600"/></svg>
<svg style="left:11px;top:321px" width="14" height="14" viewBox="0 0 14 14"><circle cx="7" cy="7" r="7" fill="#9a5a3c"/><path d="M7 7C7 4 5.5 1.8 3.4 1M7 7C9.6 5.5 12.4 5.8 13.8 7.6M7 7C4.6 8.6 3.4 11 3.8 13.2M7 0.2C9 2 10 4 9.6 5.9M13 10.6C10.6 11.6 8.2 10.8 6.6 9.6M0.4 6C2 4.6 4 4.4 5.6 5" fill="none" stroke="#fff" stroke-width="1"/></svg>
<svg style="left:11px;top:343px" width="14" height="10.500" viewBox="0 0 16 12"><path d="M0 4V8C0 10.2 3.6 12 8 12S16 10.2 16 8V4Z" fill="#2a63b0"/><ellipse cx="8" cy="4" rx="8" ry="4" fill="#3b7fd0"/><path d="M0.3 5.2C1.6 7.4 4.6 8.4 8 8.4S14.4 7.4 15.7 5.2" fill="none" stroke="#fff" stroke-width="0.9"/></svg>
<svg style="left:11px;top:361px" width="14.500" height="13.600" viewBox="0 0 16 15"><circle cx="9.8" cy="5.6" r="5.6" fill="#d8233f"/><path d="M6.4 9L2.2 13.6" stroke="#d8233f" stroke-width="2.4" stroke-linecap="round"/><circle cx="2.3" cy="3.6" r="1.7" fill="#d8233f"/></svg>
<span class="t" style="left:7.50px;top:670.80px;line-height:12px;color:#4a82bd;font-family:'Liberation Sans', sans-serif;font-size:9px;font-weight:normal;transform:scaleX(0.8880);transform-origin:0 0;">06.09.2021</span>
<span class="t" style="left:11.00px;top:683.80px;line-height:12px;color:#4a82bd;font-family:'Liberation Sans', sans-serif;font-size:9px;font-weight:normal;transform:scaleX(0.9416);transform-origin:0 0;">13:29:55</span>
<span class="t" style="left:17.50px;top:696.80px;line-height:12px;color:#4a82bd;font-family:'Liberation Sans', sans-serif;font-size:9px;font-weight:normal;transform:scaleX(0.9302);transform-origin:0 0;">(UTC</span>
<span class="t" style="left:14.50px;top:709.80px;line-height:12px;color:#4a82bd;font-family:'Liberation Sans', sans-serif;font-size:9px;font-weight:normal;transform:scaleX(1.0085);transform-origin:0 0;">+7:00)</span>
<div style="position:absolute;left:1156px;top:160px;width:205px;height:363px;background:#fff;border-radius:3px 3px 0 0;"></div>
<div style="position:absolute;left:1156px;top:160px;width:205px;height:22px;background:#3e96c8;border-radius:3px 3px 0 0;"></div>
<svg style="left:1160px;top:163px" width="16" height="16" viewBox="0 0 16 16"><path d="M0.5 1H3L3.8 3H15L13 9H5L4.5 10.5H13.5V12H3.5L2.8 11L3.8 8.6L1.8 2.5H0.5Z" fill="#fff"/><circle cx="4.8" cy="14" r="1.4" fill="#fff"/><circle cx="12" cy="14" r="1.4" fill="#fff"/></svg>
<span class="t" style="left:1181.00px;top:163.70px;line-height:15px;color:#fff;font-family:'Liberation Sans', sans-serif;font-size:11.5px;font-weight:normal;transform:scaleX(0.8868);transform-origin:0 0;">КОРЗИНА</span>
<svg style="left:1237px;top:166px" width="10" height="10" viewBox="0 0 10 10"><path d="M0.7 0.7L9.3 9.3M9.3 0.7L0.7 9.3" stroke="#fff" stroke-width="1.3"/></svg>
<svg style="left:1330px;top:166px" width="8" height="10" viewBox="0 0 8 10"><path d="M3 0H7.5L5 3.6H7.5L1 10L2.8 5.2H0.5Z" fill="#fff"/></svg>
<svg style="left:1343px;top:166px" width="11" height="11" viewBox="0 0 11 11"><g stroke="#fff" stroke-width="1.8"><path d="M5.5 0V11M0 5.5H11M1.6 1.6L9.4 9.4M9.4 1.6L1.6 9.4"/></g><circle cx="5.5" cy="5.5" r="3.6" fill="#fff"/><circle cx="5.5" cy="5.5" r="1.5" fill="#3e96c8"/></svg>
<div style="position:absolute;left:1159px;top:185px;width:66px;height:16px;background:#7baad4;"></div>
<div style="position:absolute;left:1156px;top:200px;width:205px;height:1px;background:#7baad4;"></div>
<span class="t" style="left:1164.50px;top:186.00px;line-height:14px;color:#fff;font-family:'Liberation Sans', sans-serif;font-size:11px;font-weight:normal;transform:scaleX(0.9697);transform-origin:0 0;">Одиночная</span>
<span class="t" style="left:1235.50px;top:186.00px;line-height:14px;color:#3a5a95;font-family:'Liberation Sans', sans-serif;font-size:11px;font-weight:normal;transform:scaleX(0.9675);transform-origin:0 0;">Экспресс</span>
<span class="t" style="left:1304.50px;top:186.00px;line-height:14px;color:#3a5a95;font-family:'Liberation Sans', sans-serif;font-size:11px;font-weight:normal;transform:scaleX(0.9252);transform-origin:0 0;">Система</span>
<span class="t" style="left:1201.00px;top:321.00px;line-height:16px;color:#333;font-family:'Liberation Sans', sans-serif;font-size:12px;font-weight:normal;transform:scaleX(0.9958);transform-origin:0 0;">Ваша корзина пуста.</span>
<span class="t" style="left:1167.50px;top:335.00px;line-height:16px;color:#333;font-family:'Liberation Sans', sans-serif;font-size:12px;font-weight:normal;">Чтобы сделать ставку, выберите</span>
<span class="t" style="left:1216.50px;top:349.00px;line-height:16px;color:#333;font-family:'Liberation Sans', sans-serif;font-size:12px;font-weight:normal;transform:scaleX(0.9807);transform-origin:0 0;">исход события.</span>
<div style="position:absolute;left:1156px;top:481px;width:205px;height:42px;background:#cfe8f5;"></div>
<div style="position:absolute;left:1156px;top:481px;width:205px;height:1px;background:#d6c4c4;"></div>
<div style="position:absolute;left:1156px;top:502px;width:205px;height:1px;background:#d6c4c4;"></div>
<svg style="left:1165px;top:486px" width="13" height="12" viewBox="0 0 13 12"><path d="M3.2 0L6.4 4H4.3V11.5H2.1V4H0Z" fill="#1e8a2e"/><path d="M9.6 12L6.4 8H8.5V0.5H10.700V8H12.800Z" fill="#d8232a"/></svg>
<span class="t" style="left:1183.00px;top:485.00px;line-height:14px;color:#222;font-family:'Liberation Sans', sans-serif;font-size:11px;font-weight:normal;transform:scaleX(0.9825);transform-origin:0 0;">Согласен с изм. суммы выкупа</span>
<svg style="left:1342px;top:489px" width="4" height="7" viewBox="0 0 4 7"><path d="M0 0V7L4 3.500Z" fill="#666"/></svg>
<svg style="left:1165px;top:507px" width="13" height="12" viewBox="0 0 13 12"><path d="M3.2 0L6.4 4H4.3V11.5H2.1V4H0Z" fill="#1e8a2e"/><path d="M9.6 12L6.4 8H8.5V0.5H10.700V8H12.800Z" fill="#d8232a"/></svg>
<span class="t" style="left:1183.00px;top:506.00px;line-height:14px;color:#222;font-family:'Liberation Sans', sans-serif;font-size:11px;font-weight:normal;transform:scaleX(0.9817);transform-origin:0 0;">Согласен с изменением кф.</span>
<svg style="left:1327px;top:510px" width="4" height="7" viewBox="0 0 4 7"><path d="M0 0V7L4 3.500Z" fill="#666"/></svg>
<div style="position:absolute;left:1156px;top:528px;width:205px;height:55px;background:linear-gradient(100deg,#a9cdee 0%,#c9e0f4 35%,#e6eef8 70%,#dfe6f3 100%);border-radius:3px;"></div>
<span class="t" style="left:1166.00px;top:541.50px;line-height:17px;color:#1f3f86;font-family:'Liberation Sans', sans-serif;font-size:13px;font-weight:bold;transform:scaleX(1.0499);transform-origin:0 0;">18 ЛЕТ</span>
<span class="t" style="left:1166.00px;top:556.00px;line-height:14px;color:#2a4f96;font-family:'Liberation Sans', sans-serif;font-size:10.5px;font-weight:normal;transform:scaleX(1.0644);transform-origin:0 0;">Играем по правилам</span>
<span class="t" style="left:1316.50px;top:537.50px;line-height:36px;color:#0a0a0a;font-family:'Liberation Sans', sans-serif;font-size:28px;font-weight:bold;font-style:italic;-webkit-text-stroke:1.400px #0a0a0a;transform:scaleX(0.9610);transform-origin:0 0;">РБ</span>
<div style="position:absolute;left:1156px;top:587px;width:205px;height:136px;background:#e7f4fd;border-radius:3px;"></div>
<span class="t" style="left:1169.00px;top:591.50px;line-height:18px;color:#1c1c1c;font-family:'DejaVu Sans', 'Liberation Sans', sans-serif;font-size:14.2px;font-weight:bold;transform:scaleX(0.8740);transform-origin:0 0;">Техническая поддержка</span>
<div style="position:absolute;left:1160px;top:617px;width:97px;height:36px;background:#fff;box-shadow:0 0 4px rgba(90,130,175,.5);border-radius:3px;"></div>
<div style="position:absolute;left:1261px;top:617px;width:96px;height:36px;background:#fff;box-shadow:0 0 4px rgba(90,130,175,.5);border-radius:3px;"></div>
<div style="position:absolute;left:1160px;top:657px;width:97px;height:36px;background:#fff;box-shadow:0 0 4px rgba(90,130,175,.5);border-radius:3px;"></div>
<div style="position:absolute;left:1261px;top:657px;width:96px;height:36px;background:#fff;box-shadow:0 0 4px rgba(90,130,175,.5);border-radius:3px;"></div>
<span class="t" style="left:1165.80px;top:626.90px;line-height:17px;color:#1c1c1c;font-family:'DejaVu Sans', 'Liberation Sans', sans-serif;font-size:13px;font-weight:bold;transform:scaleX(0.8193);transform-origin:0 0;">Live-Чат</span>
<span class="t" style="left:1266.50px;top:626.90px;line-height:17px;color:#1c1c1c;font-family:'DejaVu Sans', 'Liberation Sans', sans-serif;font-size:13px;font-weight:bold;transform:scaleX(0.8323);transform-origin:0 0;">Telegram</span>
<span class="t" style="left:1165.80px;top:666.90px;line-height:17px;color:#1c1c1c;font-family:'DejaVu Sans', 'Liberation Sans', sans-serif;font-size:13px;font-weight:bold;transform:scaleX(0.8133);transform-origin:0 0;">WhatsApp</span>
<span class="t" style="left:1266.50px;top:666.90px;line-height:17px;color:#1c1c1c;font-family:'DejaVu Sans', 'Liberation Sans', sans-serif;font-size:13px;font-weight:bold;transform:scaleX(0.7984);transform-origin:0 0;">Viber</span>
<span class="t" style="left:1201.50px;top:698.50px;line-height:18px;color:#1c1c1c;font-family:'DejaVu Sans', 'Liberation Sans', sans-serif;font-size:14.2px;font-weight:bold;transform:scaleX(0.8881);transform-origin:0 0;">8 800 100 74 75</span>
<svg style="left:1229px;top:625px" width="20" height="21" viewBox="0 0 20 21"><circle cx="10" cy="10" r="9.200" fill="#3873a6"/><path d="M3.600 9.800C6 9.600 8.600 8 10.200 5.200C11.600 7.800 14 9.200 16.200 9.400C16.900 13.400 14 16.600 10 16.600C6.200 16.600 3 13.600 3.600 9.800Z" fill="#fff"/><path d="M17.600 11.500C17.600 16 14.500 18.300 10.500 18.300" fill="none" stroke="#3873a6" stroke-width="1.500"/><rect x="7" y="16.800" width="5" height="2.600" rx="1.300" fill="#3873a6"/></svg>
<svg style="left:1330px;top:627px" width="19" height="16" viewBox="0 0 19 16"><path d="M0 7.200L18.600 0L15.600 15.400L10.200 11.400L7.400 14.200L7 10L15 2.600L5 9Z" fill="#3873a6"/></svg>
<svg style="left:1229px;top:665px" width="21" height="21" viewBox="0 0 21 21"><path d="M10.800 0.500A9.800 9.800 0 1 1 5.200 18.400L0.600 20.200L2.400 15.600A9.800 9.800 0 0 1 10.800 0.500Z" fill="#3873a6"/><path d="M6.600 5.600C7.200 5 8 5 8.300 5.700L9 7.400C9.200 7.900 9 8.300 8.600 8.700L8.200 9.200C8.900 10.700 10.100 11.900 11.700 12.700L12.300 12.100C12.700 11.700 13.200 11.600 13.600 11.900L15.100 12.800C15.700 13.200 15.700 13.900 15.200 14.400C14.400 15.300 13.300 15.600 12.200 15.200C9.200 14.200 6.900 11.900 5.900 8.800C5.500 7.600 5.800 6.500 6.600 5.600Z" fill="#fff"/></svg>
<svg style="left:1329px;top:665px" width="21" height="21" viewBox="0 0 21 21"><path d="M10.500 1C16 1 19.600 4 19.600 8.800C19.600 13.600 16 16.600 10.500 16.600C9.900 16.600 9.300 16.600 8.700 16.500L5.200 19.800V15.600C2.800 14.200 1.400 11.800 1.400 8.800C1.400 4 5 1 10.500 1Z" fill="#fff" stroke="#3873a6" stroke-width="1.500"/><path d="M7.400 5.200C7.800 4.800 8.400 4.900 8.700 5.400L9.400 6.700C9.600 7.100 9.500 7.500 9.200 7.800L8.800 8.200C9.300 9.400 10.200 10.300 11.400 10.900L11.900 10.400C12.200 10.100 12.600 10.100 13 10.300L14.200 11.100C14.700 11.400 14.700 12 14.300 12.400C13.700 13.100 12.800 13.300 11.900 13C9.500 12.200 7.700 10.400 6.900 7.900C6.600 6.900 6.800 5.900 7.400 5.200Z" fill="#3873a6"/><path d="M11 4.600C13.200 4.800 14.600 6.200 14.800 8.400M11.200 6.200C12.400 6.400 13.100 7.100 13.300 8.300" fill="none" stroke="#3873a6" stroke-width="0.900" stroke-linecap="round"/></svg>
<span class="t" style="left:23.50px;top:75.50px;line-height:47px;color:#fff;font-family:'Liberation Sans', sans-serif;font-size:36.5px;font-weight:bold;font-style:italic;-webkit-text-stroke:2.300px #fff;letter-spacing:3px;transform:scaleX(1.1199);transform-origin:0 0;">БЕТСИТИ</span>
<svg style="left:19px;top:95px" width="14" height="6" viewBox="0 0 14 6"><path d="M1.300 0H14L12.700 6H0Z" fill="#fff"/></svg>
<div style="position:absolute;left:303px;top:83px;width:152px;height:34px;background:#15709f;border:1px solid #3fb6d8;border-radius:3px;"></div>
<span class="t" style="left:317.50px;top:87.00px;line-height:14px;color:#f3e23a;font-family:'Liberation Sans', sans-serif;font-size:11px;font-weight:normal;transform:scaleX(0.9126);transform-origin:0 0;">ПРИЛОЖЕНИЯ БЕТСИТИ</span>
<svg style="left:367px;top:100px" width="12" height="13" viewBox="0 0 12 13"><g fill="#f0c24a"><path d="M2.400 4.400H9.600V10.200C9.600 10.600 9.300 10.900 8.900 10.900H3.100C2.700 10.900 2.400 10.600 2.400 10.200Z"/><path d="M2.400 3.900C2.500 2.200 4 0.900 6 0.900S9.500 2.200 9.600 3.900Z"/><rect x="0.300" y="4.400" width="1.600" height="4.600" rx="0.800"/><rect x="10.100" y="4.400" width="1.600" height="4.600" rx="0.800"/><rect x="3.600" y="9.800" width="1.700" height="3.200" rx="0.800"/><rect x="6.700" y="9.800" width="1.700" height="3.200" rx="0.800"/></g><path d="M3.600 0.200L4.400 1.400M8.400 0.200L7.600 1.400" stroke="#f0c24a" stroke-width="0.500"/></svg>
<svg style="left:380px;top:99px" width="12" height="14" viewBox="0 0 12 14"><g fill="#f0c24a"><path d="M8.300 0C8.400 1.300 7.400 2.700 6 2.800C5.800 1.500 7 0.200 8.300 0Z"/><path d="M11.400 10.200C10.700 12 9.600 13.800 8.300 13.800C7.400 13.800 7.100 13.200 6 13.200S4.500 13.800 3.700 13.800C2.300 13.800 0.400 10.800 0.400 7.900C0.400 5.200 2.100 3.800 3.700 3.800C4.700 3.800 5.500 4.400 6 4.400S7.500 3.700 8.700 3.700C9.400 3.700 10.500 4 11.200 5C9.200 6.200 9.400 9.300 11.400 10.200Z"/></g></svg>
<div style="position:absolute;left:460px;top:83px;width:34px;height:34px;background:#3571a3;border:1px solid #6d9bc4;border-radius:3px;"></div>
<svg style="left:471.500px;top:92px" width="11" height="17" viewBox="0 0 12 19"><path d="M2.200 0.500H4V3H10C11 3 11.600 3.600 11.600 4.600V16.800C11.600 17.800 11 18.400 10 18.400H2C1 18.400 0.400 17.800 0.400 16.800V4.600C0.400 3.800 0.900 3.200 1.600 3.050V1.100C1.600 0.800 1.900 0.500 2.200 0.500Z" fill="#fff"/><rect x="2" y="5" width="8" height="4" fill="#3571a3"/><rect x="2.2" y="10.4" width="1.800" height="1.400" fill="#3571a3"/><rect x="2.2" y="12.7" width="1.800" height="1.400" fill="#3571a3"/><rect x="2.2" y="15.0" width="1.800" height="1.400" fill="#3571a3"/><rect x="5.1" y="10.4" width="1.800" height="1.400" fill="#3571a3"/><rect x="5.1" y="12.7" width="1.800" height="1.400" fill="#3571a3"/><rect x="5.1" y="15.0" width="1.800" height="1.400" fill="#3571a3"/><rect x="8.0" y="10.4" width="1.800" height="1.400" fill="#3571a3"/><rect x="8.0" y="12.7" width="1.800" height="1.400" fill="#3571a3"/><rect x="8.0" y="15.0" width="1.800" height="1.400" fill="#3571a3"/></svg>
<div style="position:absolute;left:994px;top:83px;width:368px;height:34px;background:#3571a3;border:1px solid #5f90bd;border-radius:2px;"></div>
<svg style="left:1004px;top:94px" width="7" height="12" viewBox="0 0 7 12"><path d="M1 0.700L6 6L1 11.300" fill="none" stroke="#fff" stroke-width="1.200"/></svg>
<span class="t" style="left:1023.00px;top:88.50px;line-height:13px;color:#b5d9f3;font-family:'Liberation Sans', sans-serif;font-size:10px;font-weight:normal;">Ваш логин:</span>
<span class="t" style="left:1023.00px;top:98.00px;line-height:16px;color:#fff;font-family:'Liberation Sans', sans-serif;font-size:12px;font-weight:bold;transform:scaleX(1.0134);transform-origin:0 0;">Makc803803</span>
<span class="t" style="left:1102.00px;top:88.50px;line-height:13px;color:#b5d9f3;font-family:'Liberation Sans', sans-serif;font-size:10px;font-weight:normal;transform:scaleX(0.9886);transform-origin:0 0;">Номер счета:</span>
<span class="t" style="left:1102.00px;top:98.00px;line-height:16px;color:#fff;font-family:'Liberation Sans', sans-serif;font-size:12px;font-weight:bold;transform:scaleX(1.0619);transform-origin:0 0;">10611932</span>
<div style="position:absolute;left:1171px;top:92px;width:1px;height:17px;background:#6a9ac6;"></div>
<svg style="left:1180px;top:93px" width="14" height="14" viewBox="0 0 14 14"><path d="M11.400 4.400A5.200 5.200 0 1 0 12.200 8" fill="none" stroke="#fff" stroke-width="1.700"/><path d="M12.900 0.800V5.400H8.300Z" fill="#fff"/></svg>
<span class="t" style="left:1203.00px;top:88.50px;line-height:13px;color:#b5d9f3;font-family:'Liberation Sans', sans-serif;font-size:10px;font-weight:normal;transform:scaleX(0.9693);transform-origin:0 0;">Баланс</span>
<span class="t" style="left:1203.00px;top:98.00px;line-height:16px;color:#fff;font-family:'Liberation Sans', sans-serif;font-size:12px;font-weight:bold;">0,06 руб</span>
<div style="position:absolute;left:1259px;top:92px;width:1px;height:17px;background:#6a9ac6;"></div>
<span class="t" style="left:1268.00px;top:88.50px;line-height:13px;color:#b5d9f3;font-family:'Liberation Sans', sans-serif;font-size:10px;font-weight:normal;">Текущие пари</span>
<span class="t" style="left:1268.00px;top:98.00px;line-height:16px;color:#fff;font-family:'Liberation Sans', sans-serif;font-size:12px;font-weight:bold;transform:scaleX(0.9915);transform-origin:0 0;">0 руб</span>
<svg style="left:1342px;top:93px" width="13" height="14" viewBox="0 0 13 14"><path d="M8.500 3V1H1V13H8.500V11" fill="none" stroke="#fff" stroke-width="1.700"/><path d="M4.500 6H9V3.800L12.800 7L9 10.200V8H4.500Z" fill="#fff"/></svg>
<svg style="left:12px;top:138px" width="7" height="11" viewBox="0 0 7 11"><path d="M1 0.800L5.600 5.500L1 10.200" fill="none" stroke="#fff" stroke-width="1.500"/></svg>
<svg style="left:32px;top:136px" width="14" height="14" viewBox="0 0 14 14"><circle cx="5.300" cy="5.300" r="3.800" fill="none" stroke="#fff" stroke-width="1.500"/><path d="M8.200 8.200L12.500 12.500" stroke="#fff" stroke-width="2" stroke-linecap="round"/></svg>
<div style="position:absolute;left:1286px;top:137px;width:14px;height:12px;background:#fff;border-radius:2px;"></div>
<span class="t" style="left:1287.75px;top:137.00px;line-height:12px;color:#2c5a8c;font-family:'Liberation Sans', sans-serif;font-size:9px;font-weight:bold;transform:scaleX(0.8390);transform-origin:0 0;">1.5</span>
<svg style="left:1313px;top:137px" width="13" height="13" viewBox="0 0 13 13"><g stroke="#fff" stroke-width="2.800"><path d="M6.500 0.300V12.700M0.300 6.500H12.700M2.100 2.100L10.900 10.900M10.900 2.100L2.100 10.900"/></g><circle cx="6.500" cy="6.500" r="4.700" fill="#fff"/><circle cx="6.500" cy="6.500" r="2.100" fill="#3e96c8"/></svg>
<div style="position:absolute;left:1337px;top:138px;width:14px;height:3.5px;background:#fff;"></div>
<div style="position:absolute;left:1337px;top:141.5px;width:14px;height:3.3px;background:#2344b4;"></div>
<div style="position:absolute;left:1337px;top:144.8px;width:14px;height:3.2px;background:#d8202c;"></div>
<svg style="left:10px;top:7px" width="16" height="17" viewBox="0 0 16 17"><ellipse cx="8" cy="8.500" rx="6.300" ry="7" fill="none" stroke="#e0162b" stroke-width="3.200"/></svg>
<span class="t" style="left:32.00px;top:8.00px;line-height:16px;color:#3a3f47;font-family:'Liberation Sans', sans-serif;font-size:12.5px;font-weight:normal;transform:scaleX(0.9764);transform-origin:0 0;">Меню</span>
<svg style="left:84px;top:7px" width="16" height="16" viewBox="0 0 16 16"><circle cx="8" cy="8" r="8" fill="#fc3f1d"/></svg>
<span class="t" style="left:88.50px;top:7.20px;line-height:16px;color:#fff;font-family:'Liberation Sans', sans-serif;font-size:12.5px;font-weight:bold;transform:scaleX(0.7791);transform-origin:0 0;">Я</span>
<span class="t" style="left:103.00px;top:8.00px;line-height:16px;color:transparent;font-family:'Liberation Sans', sans-serif;font-size:12.5px;font-weight:normal;background:linear-gradient(90deg,#5b6673 0,#5b6673 5px,rgba(91,102,115,0.1) 19px,rgba(91,102,115,0) 22px);-webkit-background-clip:text;background-clip:text;">Ян</span>
<span class="t" style="left:151.00px;top:8.00px;line-height:16px;color:transparent;font-family:'Liberation Sans', sans-serif;font-size:12.5px;font-weight:normal;background:linear-gradient(90deg,#5b6673 0,#5b6673 5px,rgba(91,102,115,0.1) 19px,rgba(91,102,115,0) 22px);-webkit-background-clip:text;background-clip:text;">htt</span>
<span class="t" style="left:199.00px;top:8.00px;line-height:16px;color:transparent;font-family:'Liberation Sans', sans-serif;font-size:12.5px;font-weight:normal;background:linear-gradient(90deg,#5b6673 0,#5b6673 5px,rgba(91,102,115,0.1) 19px,rgba(91,102,115,0) 22px);-webkit-background-clip:text;background-clip:text;">Му</span>
<span class="t" style="left:247.00px;top:8.00px;line-height:16px;color:transparent;font-family:'Liberation Sans', sans-serif;font-size:12.5px;font-weight:normal;background:linear-gradient(90deg,#5b6673 0,#5b6673 5px,rgba(91,102,115,0.1) 19px,rgba(91,102,115,0) 22px);-webkit-background-clip:text;background-clip:text;">По</span>
<span class="t" style="left:295.00px;top:8.00px;line-height:16px;color:transparent;font-family:'Liberation Sans', sans-serif;font-size:12.5px;font-weight:normal;background:linear-gradient(90deg,#5b6673 0,#5b6673 5px,rgba(91,102,115,0.1) 19px,rgba(91,102,115,0) 22px);-webkit-background-clip:text;background-clip:text;">За</span>
<span class="t" style="left:343.00px;top:8.00px;line-height:16px;color:transparent;font-family:'Liberation Sans', sans-serif;font-size:12.5px;font-weight:normal;background:linear-gradient(90deg,#5b6673 0,#5b6673 5px,rgba(91,102,115,0.1) 19px,rgba(91,102,115,0) 22px);-webkit-background-clip:text;background-clip:text;">htt</span>
<span class="t" style="left:391.00px;top:8.00px;line-height:16px;color:transparent;font-family:'Liberation Sans', sans-serif;font-size:12.5px;font-weight:normal;background:linear-gradient(90deg,#5b6673 0,#5b6673 5px,rgba(91,102,115,0.1) 19px,rgba(91,102,115,0) 22px);-webkit-background-clip:text;background-clip:text;">Гл</span>
<span class="t" style="left:439.00px;top:8.00px;line-height:16px;color:transparent;font-family:'Liberation Sans', sans-serif;font-size:12.5px;font-weight:normal;background:linear-gradient(90deg,#5b6673 0,#5b6673 5px,rgba(91,102,115,0.1) 19px,rgba(91,102,115,0) 22px);-webkit-background-clip:text;background-clip:text;">Вт</span>
<span class="t" style="left:487.00px;top:8.00px;line-height:16px;color:transparent;font-family:'Liberation Sans', sans-serif;font-size:12.5px;font-weight:normal;background:linear-gradient(90deg,#5b6673 0,#5b6673 5px,rgba(91,102,115,0.1) 19px,rgba(91,102,115,0) 22px);-webkit-background-clip:text;background-clip:text;">Ру</span>
<span class="t" style="left:535.00px;top:8.00px;line-height:16px;color:transparent;font-family:'Liberation Sans', sans-serif;font-size:12.5px;font-weight:normal;background:linear-gradient(90deg,#5b6673 0,#5b6673 5px,rgba(91,102,115,0.1) 19px,rgba(91,102,115,0) 22px);-webkit-background-clip:text;background-clip:text;">Ла</span>
<span class="t" style="left:583.00px;top:8.00px;line-height:16px;color:transparent;font-family:'Liberation Sans', sans-serif;font-size:12.5px;font-weight:normal;background:linear-gradient(90deg,#5b6673 0,#5b6673 5px,rgba(91,102,115,0.1) 19px,rgba(91,102,115,0) 22px);-webkit-background-clip:text;background-clip:text;">Не</span>
<span class="t" style="left:631.00px;top:8.00px;line-height:16px;color:transparent;font-family:'Liberation Sans', sans-serif;font-size:12.5px;font-weight:normal;background:linear-gradient(90deg,#5b6673 0,#5b6673 5px,rgba(91,102,115,0.1) 19px,rgba(91,102,115,0) 22px);-webkit-background-clip:text;background-clip:text;">Ли</span>
<span class="t" style="left:679.00px;top:8.00px;line-height:16px;color:transparent;font-family:'Liberation Sans', sans-serif;font-size:12.5px;font-weight:normal;background:linear-gradient(90deg,#5b6673 0,#5b6673 5px,rgba(91,102,115,0.1) 19px,rgba(91,102,115,0) 22px);-webkit-background-clip:text;background-clip:text;">Ка</span>
<span class="t" style="left:727.00px;top:8.00px;line-height:16px;color:transparent;font-family:'Liberation Sans', sans-serif;font-size:12.5px;font-weight:normal;background:linear-gradient(90deg,#5b6673 0,#5b6673 5px,rgba(91,102,115,0.1) 19px,rgba(91,102,115,0) 22px);-webkit-background-clip:text;background-clip:text;">Нг</span>
<span class="t" style="left:775.00px;top:8.00px;line-height:16px;color:transparent;font-family:'Liberation Sans', sans-serif;font-size:12.5px;font-weight:normal;background:linear-gradient(90deg,#5b6673 0,#5b6673 5px,rgba(91,102,115,0.1) 19px,rgba(91,102,115,0) 22px);-webkit-background-clip:text;background-clip:text;">Ль</span>
<span class="t" style="left:823.00px;top:8.00px;line-height:16px;color:#444;font-family:'Liberation Sans', sans-serif;font-size:12.5px;font-weight:normal;">72</span>
<span class="t" style="left:871.00px;top:8.00px;line-height:16px;color:transparent;font-family:'Liberation Sans', sans-serif;font-size:12.5px;font-weight:normal;background:linear-gradient(90deg,#5b6673 0,#5b6673 5px,rgba(91,102,115,0.1) 19px,rgba(91,102,115,0) 22px);-webkit-background-clip:text;background-clip:text;">Ри</span>
<span class="t" style="left:919.00px;top:8.00px;line-height:16px;color:transparent;font-family:'Liberation Sans', sans-serif;font-size:12.5px;font-weight:normal;background:linear-gradient(90deg,#5b6673 0,#5b6673 5px,rgba(91,102,115,0.1) 19px,rgba(91,102,115,0) 22px);-webkit-background-clip:text;background-clip:text;">ТТ</span>
<span class="t" style="left:967.00px;top:8.00px;line-height:16px;color:transparent;font-family:'Liberation Sans', sans-serif;font-size:12.5px;font-weight:normal;background:linear-gradient(90deg,#5b6673 0,#5b6673 5px,rgba(91,102,115,0.1) 19px,rgba(91,102,115,0) 22px);-webkit-background-clip:text;background-clip:text;">Фи</span>
<span class="t" style="left:1078.00px;top:8.00px;line-height:16px;color:transparent;font-family:'Liberation Sans', sans-serif;font-size:12.5px;font-weight:normal;background:linear-gradient(90deg,#5b6673 0,#5b6673 5px,rgba(91,102,115,0.1) 19px,rgba(91,102,115,0) 22px);-webkit-background-clip:text;background-clip:text;">Ма</span>
<span class="t" style="left:1126.00px;top:8.00px;line-height:16px;color:transparent;font-family:'Liberation Sans', sans-serif;font-size:12.5px;font-weight:normal;background:linear-gradient(90deg,#5b6673 0,#5b6673 5px,rgba(91,102,115,0.1) 19px,rgba(91,102,115,0) 22px);-webkit-background-clip:text;background-clip:text;">Эк</span>
<span class="t" style="left:1013.50px;top:8.00px;line-height:16px;color:#222;font-family:'Liberation Sans', sans-serif;font-size:12px;font-weight:normal;transform:scaleX(0.8403);transform-origin:0 0;">Ра</span>
<div style="position:absolute;left:1021px;top:6px;width:6px;height:20px;background:linear-gradient(90deg,rgba(255,255,255,0),rgba(255,255,255,1))"></div>
<svg style="left:1033px;top:11px" width="10" height="10" viewBox="0 0 10 10"><path d="M0.500 0.500L9.500 9.500M9.500 0.500L0.500 9.500" stroke="#222" stroke-width="1.200"/></svg>
<div style="position:absolute;left:180px;top:7px;width:16px;height:16px;background:#005ff9;border-radius:3px;"></div>
<span class="t" style="left:180px;top:6px;width:16px;line-height:17px;text-align:center;font-size:13px;font-weight:bold;color:#ff9e00">@</span>
<div style="position:absolute;left:228px;top:7px;width:16px;height:16px;background:#005ff9;border-radius:3px;"></div>
<svg style="left:230px;top:10px" width="12" height="10" viewBox="0 0 12 10"><rect x="0.700" y="0.700" width="10.600" height="8.600" rx="1.500" fill="#fff"/><path d="M2.500 3L6 6L9.500 3M2.500 7.500L4.800 5.200M9.500 7.500L7.200 5.200" fill="none" stroke="#005ff9" stroke-width="1.200"/></svg>
<svg style="left:276px;top:7px" width="16" height="16" viewBox="0 0 16 16"><path d="M1.500 0H14.500C15.300 0 16 0.700 16 1.500V9C16 13 12 15 8 16C4 15 0 13 0 9V1.500C0 0.700 0.700 0 1.500 0Z" fill="#e5331f"/><path d="M8 3L5 8H7.200L6 13L8 9.500L10 13L8.800 8H11Z" fill="#fff"/></svg>
<div style="position:absolute;left:324px;top:7px;width:16px;height:16px;background:linear-gradient(#dfe6f4,#8fa3d6);"></div>
<svg style="left:324px;top:7px" width="16" height="16" viewBox="0 0 16 16"><path d="M10.500 1.500L3 10H9.500L8.800 14H12L14 1.500Z" fill="#2b44a8"/><path d="M0 13.500H16V16H0Z" fill="#2b44a8"/></svg>
<div style="position:absolute;left:372px;top:7px;width:16px;height:16px;background:#e62e04;border-radius:3px;"></div>
<svg style="left:374px;top:10px" width="12" height="10" viewBox="0 0 12 10"><path d="M1.500 2C2 6.500 4 8 6 8S10 6.500 10.500 2" fill="none" stroke="#fff" stroke-width="1.800" stroke-linecap="round"/><path d="M0 0H12" stroke="#ff8a00" stroke-width="2"/></svg>
<div style="position:absolute;left:420px;top:7px;width:16px;height:16px;background:#fff;border-radius:3px;"></div>
<span class="t" style="left:420px;top:7px;width:16px;line-height:16px;text-align:center;font-family:'Liberation Serif',serif;font-size:14px;color:#111">W</span>
<div style="position:absolute;left:468px;top:7px;width:16px;height:16px;background:#fff;border-radius:3px;"></div>
<span class="t" style="left:468px;top:7px;width:16px;line-height:16px;text-align:center;font-family:'Liberation Serif',serif;font-size:14px;color:#111">W</span>
<div style="position:absolute;left:516px;top:7px;width:16px;height:16px;background:#fff;border-radius:3px;"></div>
<span class="t" style="left:516px;top:7px;width:16px;line-height:16px;text-align:center;font-family:'Liberation Serif',serif;font-size:14px;color:#111">W</span>
<div style="position:absolute;left:564px;top:7px;width:16px;height:16px;background:#fff;border-radius:3px;"></div>
<span class="t" style="left:564px;top:7px;width:16px;line-height:16px;text-align:center;font-family:'Liberation Serif',serif;font-size:14px;color:#111">W</span>
<div style="position:absolute;left:612px;top:7px;width:16px;height:16px;background:#fff;border-radius:3px;"></div>
<span class="t" style="left:612px;top:7px;width:16px;line-height:16px;text-align:center;font-family:'Liberation Serif',serif;font-size:14px;color:#111">W</span>
<div style="position:absolute;left:660px;top:7px;width:16px;height:16px;background:#fff;border-radius:3px;"></div>
<span class="t" style="left:660px;top:7px;width:16px;line-height:16px;text-align:center;font-family:'Liberation Serif',serif;font-size:14px;color:#111">W</span>
<div style="position:absolute;left:708px;top:7px;width:16px;height:16px;background:#fff;border-radius:3px;"></div>
<span class="t" style="left:708px;top:7px;width:16px;line-height:16px;text-align:center;font-family:'Liberation Serif',serif;font-size:14px;color:#111">W</span>
<div style="position:absolute;left:756px;top:7px;width:16px;height:16px;background:#fff;border-radius:3px;"></div>
<span class="t" style="left:756px;top:7px;width:16px;line-height:16px;text-align:center;font-family:'Liberation Serif',serif;font-size:14px;color:#111">W</span>
<div style="position:absolute;left:804px;top:7px;width:16px;height:16px;background:#fff;border-radius:3px;"></div>
<span class="t" style="left:804px;top:7px;width:16px;line-height:16px;text-align:center;font-family:'Liberation Serif',serif;font-size:14px;color:#111">W</span>
<div style="position:absolute;left:852px;top:7px;width:16px;height:16px;background:#1c7a1c;"></div>
<svg style="left:854px;top:9px" width="12" height="12" viewBox="0 0 12 12"><path d="M9.500 3.500A4.300 4.300 0 1 0 10 8" fill="none" stroke="#fff" stroke-width="1.600"/><circle cx="10" cy="2.600" r="1.600" fill="#e02020"/></svg>
<div style="position:absolute;left:900px;top:8px;width:14px;height:14px;background:#c8311c;"></div>
<svg style="left:901px;top:6px" width="12" height="18" viewBox="0 0 12 18"><circle cx="6" cy="9" r="4.600" fill="#f4efe4" stroke="#d9a520" stroke-width="1.500"/><rect x="4.800" y="1" width="2.400" height="3" fill="#d9a520"/><rect x="4.800" y="14" width="2.400" height="3" fill="#d9a520"/></svg>
<svg style="left:947px;top:6px" width="18" height="18" viewBox="0 0 18 18"><path d="M10 1L11.500 5L15.500 5L12.300 7.500L13.500 11.500L10 9L6.500 11.500L7.700 7.500L4.500 5L8.500 5Z" fill="#e0213c"/><path d="M5 7L6.500 11L10.500 11L7.300 13.500L8.500 17.500L5 15L1.500 17.500L2.700 13.500L-0.500 11L3.500 11Z" fill="#1eab3c"/><path d="M13 7.500L14.500 11.500L18.500 11.500L15.300 14L16.500 18L13 15.500L9.500 18L10.700 14L7.500 11.500L11.500 11.500Z" fill="#2a55e0"/></svg>
<div style="position:absolute;left:995px;top:8px;width:14px;height:14px;background:#1e96f0;border-radius:3px;"></div>
<span class="t" style="left:995px;top:8px;width:14px;line-height:14px;text-align:center;font-size:11.500px;font-weight:bold;font-style:italic;color:#fff">Б</span>
<div style="position:absolute;left:1059px;top:7px;width:16px;height:16px;background:#2787f5;border-radius:4px;"></div>
<span class="t" style="left:1059px;top:7px;width:16px;line-height:16px;text-align:center;font-size:8px;font-weight:bold;color:#fff">VK</span>
<div style="position:absolute;left:1108px;top:9px;width:6px;height:5px;background:#6b6f76;border-radius:1px;"></div>
<div style="position:absolute;left:1108px;top:16px;width:6px;height:5px;background:#6b6f76;border-radius:1px;"></div>
<div style="position:absolute;left:1116px;top:9px;width:6px;height:5px;background:#6b6f76;border-radius:1px;"></div>
<div style="position:absolute;left:1116px;top:16px;width:6px;height:5px;background:#6b6f76;border-radius:1px;"></div>
<svg style="left:1154px;top:9px" width="12" height="12" viewBox="0 0 12 12"><path d="M6 0V12M0 6H12" stroke="#333" stroke-width="1.300"/></svg>
<svg style="left:1217px;top:6px" width="16" height="16" viewBox="0 0 16 16"><circle cx="6.300" cy="6.300" r="5" fill="none" stroke="#333" stroke-width="1.300"/><path d="M10 10L15 15" stroke="#333" stroke-width="1.300"/></svg>
<div style="position:absolute;left:1260px;top:20px;width:11px;height:1px;background:#333;"></div>
<svg style="left:1300px;top:9px" width="12" height="12" viewBox="0 0 12 12"><rect x="0.500" y="3" width="8.500" height="8.500" fill="none" stroke="#333" stroke-width="1.100"/><path d="M3 3V0.500H11.500V9H9" fill="none" stroke="#333" stroke-width="1.100"/></svg>
<svg style="left:1340px;top:9px" width="12" height="12" viewBox="0 0 12 12"><path d="M0.500 0.500L11.500 11.500M11.500 0.500L0.500 11.500" stroke="#333" stroke-width="1.200"/></svg>
<svg style="left:14px;top:43px" width="8" height="14" viewBox="0 0 8 14"><path d="M7 0.700L1 7L7 13.300" fill="none" stroke="#3b4149" stroke-width="1.400"/></svg>
<svg style="left:47px;top:43px" width="8" height="14" viewBox="0 0 8 14"><path d="M1 0.700L7 7L1 13.300" fill="none" stroke="#b9bec6" stroke-width="1.400"/></svg>
<svg style="left:76px;top:42px" width="15" height="15" viewBox="0 0 15 15"><path d="M12.600 4.600A6 6 0 1 0 13.500 8.500" fill="none" stroke="#3b4149" stroke-width="1.400"/><path d="M13.400 1V5H9.400" fill="none" stroke="#3b4149" stroke-width="1.400"/></svg>
<div style="position:absolute;left:109px;top:44px;width:6px;height:5px;border:1.300px solid #3b4149;border-radius:1.500px"></div>
<div style="position:absolute;left:109px;top:50.5px;width:6px;height:5px;border:1.300px solid #3b4149;border-radius:1.500px"></div>
<div style="position:absolute;left:117px;top:44px;width:6px;height:5px;border:1.300px solid #3b4149;border-radius:1.500px"></div>
<div style="position:absolute;left:117px;top:50.5px;width:6px;height:5px;border:1.300px solid #3b4149;border-radius:1.500px"></div>
<div style="position:absolute;left:137px;top:41px;width:1px;height:17px;background:#c9ced6;"></div>
<svg style="left:157px;top:42.500px" width="10.400" height="13" viewBox="0 0 12 15"><rect x="0.500" y="6" width="11" height="8.500" rx="1.500" fill="#2a313b"/><path d="M2.800 6.500V4.200A3.200 3.200 0 0 1 9.200 4.200V6.500" fill="none" stroke="#2a313b" stroke-width="1.600"/></svg>
<span class="t" style="left:187.00px;top:41.00px;line-height:18px;color:#1b2027;font-family:'Liberation Sans', sans-serif;font-size:14px;font-weight:normal;transform:scaleX(1.0221);transform-origin:0 0;">betcity.ru</span>
<span class="t" style="left:244.00px;top:41.00px;line-height:18px;color:#6f7b8a;font-family:'Liberation Sans', sans-serif;font-size:14px;font-weight:normal;transform:scaleX(1.0279);transform-origin:0 0;">/ru/account/calculated</span>
<svg style="left:1069.0px;top:41.0px" width="18" height="18" viewBox="0 0 18 18" fill="none" stroke="#3b4149" stroke-width="1.300"><path d="M7 3.500H2.500V15.500H14.500V11"/><path d="M6.500 12L7.500 8.500L13 2.500L16 5.500L10 11.500Z"/></svg>
<svg style="left:1095.0px;top:41.0px" width="18" height="18" viewBox="0 0 18 18" fill="none" stroke="#3b4149" stroke-width="1.300"><rect x="2" y="5" width="14" height="10.500" rx="1.500"/><path d="M6 5L7 3H11L12 5"/><circle cx="9" cy="10" r="2.800"/></svg>
<svg style="left:1121.0px;top:41.0px" width="18" height="18" viewBox="0 0 18 18" fill="none" stroke="#3b4149" stroke-width="1.300"><path d="M9 1.500L15.500 4V9.500C15.500 13 12.500 15.500 9 16.800C5.500 15.500 2.500 13 2.500 9.500V4Z"/><path d="M6.300 6.300L11.700 11.700M11.700 6.300L6.300 11.700"/></svg>
<svg style="left:1147.0px;top:41.0px" width="18" height="18" viewBox="0 0 18 18" fill="none" stroke="#3b4149" stroke-width="1.300"><path d="M2.500 3L16 9L2.500 15L5.500 9Z"/></svg>
<svg style="left:1173.0px;top:41.0px" width="18" height="18" viewBox="0 0 18 18" fill="none" stroke="#3b4149" stroke-width="1.300"><path d="M9 15.500C4 11.500 2 9 2 6.500A3.600 3.600 0 0 1 9 5A3.600 3.600 0 0 1 16 6.500C16 9 14 11.500 9 15.500Z"/></svg>
<div style="position:absolute;left:1198px;top:41px;width:1px;height:17px;background:#c9ced6;"></div>
<svg style="left:1209px;top:40px" width="20" height="19" viewBox="0 0 20 19"><path d="M0.500 0.800L4 2L7 12H16.500L19.500 4.500H6" fill="#4a78c8" stroke="#4a78c8" stroke-width="1"/><path d="M5.200 4.500H19.500L16.500 12H7Z" fill="#4a78c8"/><circle cx="7.500" cy="16.500" r="1.500" fill="#222"/><circle cx="15.500" cy="16.500" r="1.500" fill="#222"/></svg>
<div style="position:absolute;left:1242px;top:42px;width:17px;height:17px;background:linear-gradient(#5a5a5a,#1c1c1c);border-radius:3px;"></div>
<svg style="left:1243px;top:43px" width="15" height="15" viewBox="0 0 15 15"><circle cx="7.500" cy="4.500" r="3" fill="#e02a2a"/><circle cx="4.500" cy="9.500" r="3" fill="#2bb52b"/><circle cx="10.500" cy="9.500" r="3" fill="#2a4be0"/></svg>
<svg style="left:1272.0px;top:41.0px" width="18" height="18" viewBox="0 0 18 18" fill="none" stroke="#3b4149" stroke-width="1.300"><path d="M9 1.500L15.500 5V13L9 16.500L2.500 13V5Z"/><path d="M2.500 5L9 8.500L15.500 5M9 8.500V16.500"/></svg>
<svg style="left:1303.5px;top:41.0px" width="18" height="18" viewBox="0 0 18 18" fill="none" stroke="#3b4149" stroke-width="1.300"><path d="M9 2V11.500M5 7.800L9 11.800L13 7.800M2.500 12V15.500H15.500V12"/></svg>
<svg style="left:1336.0px;top:41.0px" width="18" height="18" viewBox="0 0 18 18" fill="none" stroke="#3b4149" stroke-width="1.300"><path d="M2 4.500H16M2 9H16M2 13.500H16M11.500 2.500V6.500M5.500 7V11M10 11.500V15.500"/></svg>
<div style="position:absolute;left:0px;top:728px;width:1366px;height:40px;background:linear-gradient(90deg,#20313d 0%,#1d2e3b 45%,#1a2939 72%,#172238 100%);"></div>
<div style="position:absolute;left:16px;top:740px;width:7.5px;height:7.5px;background:#fff;"></div>
<div style="position:absolute;left:16px;top:748.5px;width:7.5px;height:7.5px;background:#fff;"></div>
<div style="position:absolute;left:24.5px;top:740px;width:7.5px;height:7.5px;background:#fff;"></div>
<div style="position:absolute;left:24.5px;top:748.5px;width:7.5px;height:7.5px;background:#fff;"></div>
<div style="position:absolute;left:247px;top:728px;width:44px;height:40px;background:#4d5f6b;"></div>
<div style="position:absolute;left:292px;top:728px;width:4px;height:40px;background:#35444f;"></div>
<div style="position:absolute;left:296px;top:728px;width:48px;height:40px;background:#a56a33;"></div>
<div style="position:absolute;left:55px;top:766px;width:40px;height:2px;background:#76b9ed;"></div>
<div style="position:absolute;left:153px;top:766px;width:40px;height:2px;background:#76b9ed;"></div>
<div style="position:absolute;left:247px;top:766px;width:49px;height:2px;background:#76b9ed;"></div>
<div style="position:absolute;left:296px;top:766px;width:48px;height:2px;background:#f57c0a;"></div>
<div style="position:absolute;left:349px;top:766px;width:40px;height:2px;background:#76b9ed;"></div>
<svg style="left:63px;top:735px" width="26" height="26" viewBox="0 0 26 26"><path d="M3 2H17L19 15H5Z" fill="#2a5fd8" stroke="#c9d3e0" stroke-width="1.500"/><path d="M7 17H17L19 21H6Z" fill="#9aa6b4"/><circle cx="18" cy="19" r="5.500" fill="#5a6470" stroke="#c9d3e0" stroke-width="0.800"/><path d="M15.500 19L18 17M20.500 19L18 21" stroke="#5cf07a" stroke-width="1.400"/></svg>
<svg style="left:112px;top:736px" width="24" height="22" viewBox="0 0 24 22"><path d="M1 3H9L11 5.500H23V20H1Z" fill="#f7c548"/><path d="M1 8H23V20H1Z" fill="#fbd968"/><path d="M6 14H18V20H6Z" fill="#3b8de0"/><path d="M9 17H15V20H9Z" fill="#fbd968"/></svg>
<svg style="left:161px;top:736px" width="24" height="24" viewBox="0 0 24 24"><circle cx="12" cy="12" r="11.500" fill="#f4f4f4"/><path d="M6.500 5.500L12 13V20M17.500 5.500L12 13" fill="none" stroke="#e8212e" stroke-width="2.600" stroke-linecap="round"/></svg>
<svg style="left:210px;top:735px" width="24" height="26" viewBox="0 0 24 26"><path d="M0 1H18L24 7V25H0Z" fill="#f58a1f"/><path d="M18 1V7H24Z" fill="#ffd19a"/><path d="M16 8.500A5.500 5.500 0 1 0 17.500 13H12" fill="none" stroke="#fff" stroke-width="2.200"/></svg>
<span class="t" style="left:216.00px;top:751.00px;line-height:8px;color:#fff;font-family:'Liberation Sans', sans-serif;font-size:6px;font-weight:bold;">PDF</span>
<svg style="left:259px;top:736px" width="23" height="23" viewBox="0 0 23 23"><defs><linearGradient id="opg" x1="0" y1="0" x2="1" y2="1"><stop offset="0" stop-color="#ff3a4a"/><stop offset="1" stop-color="#c20d1d"/></linearGradient></defs><circle cx="11.500" cy="11.500" r="11.300" fill="url(#opg)"/><ellipse cx="11.500" cy="11.500" rx="5.300" ry="8.700" fill="#4d5f6b"/></svg>
<svg style="left:307px;top:734px" width="30" height="30" viewBox="0 0 30 30"><circle cx="12.600" cy="12.400" r="9.600" fill="#12a5f4"/><circle cx="7" cy="6.600" r="5" fill="#0f9ae8"/><circle cx="18" cy="18" r="5" fill="#12a5f4"/><path d="M16 8.600C14 7 9.500 7.200 9.500 10C9.500 13 16 12 16 15.300C16 18 10.500 18.200 8.600 16.400" fill="none" stroke="#fff" stroke-width="2.200" stroke-linecap="round"/><circle cx="19.500" cy="20.600" r="7.300" fill="#e8453c"/></svg>
<span class="t" style="left:323.58px;top:748.00px;line-height:14px;color:#fff;font-family:'Liberation Sans', sans-serif;font-size:10.5px;font-weight:bold;">1</span>
<svg style="left:357px;top:739px" width="24" height="18" viewBox="0 0 24 18"><rect width="24" height="18" fill="#ffd633"/><path d="M0 18L12 8L24 18Z" fill="#ffc61a"/><path d="M0 0L12 10L24 0Z" fill="#f5322d"/></svg>
<svg style="left:997px;top:738px" width="20" height="20" viewBox="0 0 20 20"><defs><linearGradient id="sun" x1="0" y1="0" x2="1" y2="1"><stop offset="0" stop-color="#ffe14a"/><stop offset="1" stop-color="#f7a21b"/></linearGradient></defs><circle cx="10" cy="10" r="9.500" fill="url(#sun)"/></svg>
<span class="t" style="left:1027.00px;top:738.00px;line-height:20px;color:#fff;font-family:'Liberation Sans', sans-serif;font-size:15px;font-weight:normal;transform:scaleX(0.8653);transform-origin:0 0;">26°C</span>
<span class="t" style="left:1065.00px;top:738.00px;line-height:20px;color:#fff;font-family:'Liberation Sans', sans-serif;font-size:15px;font-weight:normal;transform:scaleX(0.9241);transform-origin:0 0;">Солнечно</span>
<svg style="left:1144px;top:743px" width="14" height="8" viewBox="0 0 14 8"><path d="M1 7.300L7 1.300L13 7.300" fill="none" stroke="#fff" stroke-width="1.300"/></svg>
<svg style="left:1168px;top:738px" width="15" height="20" viewBox="0 0 15 20"><g fill="none" stroke="#fff" stroke-width="1.200"><rect x="1" y="5.500" width="9" height="9" rx="1.500"/><path d="M10 9L14 7V13L10 11"/><path d="M2 3C3 1 8 1 9 3M2 17C3 19 8 19 9 17"/></g></svg>
<svg style="left:1190px;top:740px" width="19" height="16" viewBox="0 0 19 16"><g fill="none" stroke="#fff" stroke-width="1.200"><path d="M1 5.500H4L8 1.500V14.500L4 10.500H1Z"/><path d="M11.500 5.500L16.500 10.500M16.500 5.500L11.500 10.500"/></g></svg>
<span class="t" style="left:1218.00px;top:739.50px;line-height:16px;color:#fff;font-family:'Liberation Sans', sans-serif;font-size:12.5px;font-weight:normal;transform:scaleX(0.9189);transform-origin:0 0;">РУС</span>
<span class="t" style="left:1265.50px;top:731.00px;line-height:16px;color:#fff;font-family:'Liberation Sans', sans-serif;font-size:12.5px;font-weight:normal;transform:scaleX(0.8951);transform-origin:0 0;">13:29</span>
<span class="t" style="left:1252.50px;top:749.00px;line-height:16px;color:#fff;font-family:'Liberation Sans', sans-serif;font-size:12.5px;font-weight:normal;transform:scaleX(0.8631);transform-origin:0 0;">06.09.2021</span>
<svg style="left:1325px;top:741px" width="16" height="15" viewBox="0 0 16 15"><path d="M0 0H16V11H4.500V15L0.500 11H0Z" fill="#fff"/><path d="M3 3H13M3 5.500H13M3 8H13" stroke="#19253a" stroke-width="0.900"/></svg>
<svg style="left:1332px;top:746.500px" width="16" height="16" viewBox="0 0 16 16"><circle cx="8" cy="8" r="9" fill="#2a3038" stroke="#8a939d" stroke-width="1.100"/></svg>
<span class="t" style="left:1333.32px;top:746.50px;line-height:16px;color:#fff;font-family:'Liberation Sans', sans-serif;font-size:12px;font-weight:bold;">20</span>
</body></html>
